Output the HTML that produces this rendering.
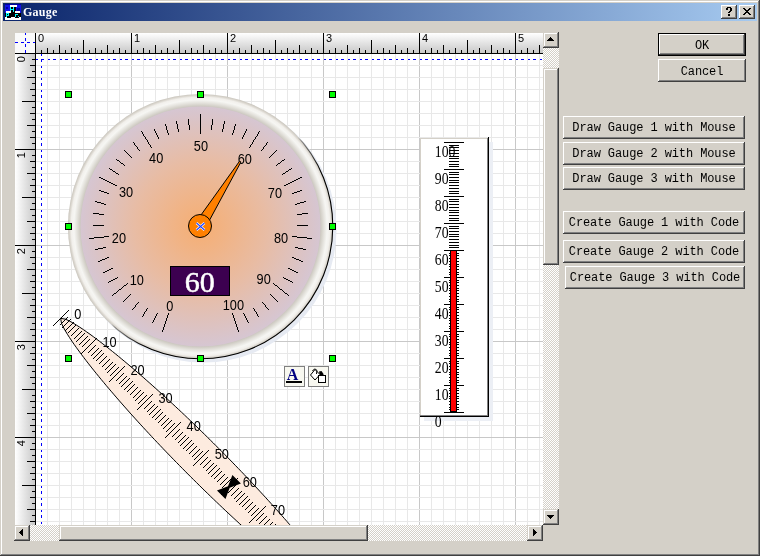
<!DOCTYPE html>
<html><head><meta charset="utf-8"><style>
html,body{margin:0;padding:0;width:760px;height:556px;overflow:hidden;background:#D4D0C8;}

</style></head><body>
<svg width="760" height="556" viewBox="0 0 760 556" style="display:block;will-change:transform">
<defs>
<linearGradient id="title" x1="0" y1="0" x2="1" y2="0"><stop offset="0" stop-color="#0A246A"/><stop offset="1" stop-color="#A6CAF0"/></linearGradient>
<linearGradient id="rulerH" x1="0" y1="0" x2="0" y2="1"><stop offset="0" stop-color="#FFFFFF"/><stop offset="1" stop-color="#C8C8C8"/></linearGradient>
<linearGradient id="rulerV" x1="0" y1="0" x2="1" y2="0"><stop offset="0" stop-color="#FFFFFF"/><stop offset="1" stop-color="#C8C8C8"/></linearGradient>
<pattern id="dith" x="0" y="0" width="2" height="2" patternUnits="userSpaceOnUse"><rect width="2" height="2" fill="#D4D0C8"/><rect x="0" y="0" width="1" height="1" fill="#FFFFFF"/><rect x="1" y="1" width="1" height="1" fill="#FFFFFF"/></pattern>
<radialGradient id="face" cx="0.5" cy="0.5" r="0.5"><stop offset="0" stop-color="#F6AE72"/><stop offset="0.55" stop-color="#E8BCA4"/><stop offset="1" stop-color="#D6C6D2"/></radialGradient>
<radialGradient id="bezel" gradientUnits="userSpaceOnUse" cx="200.5" cy="226.5" r="132.6"><stop offset="0.905" stop-color="#CCC8C0"/><stop offset="0.93" stop-color="#E2E0DA"/><stop offset="0.955" stop-color="#F6F6F3"/><stop offset="0.975" stop-color="#F2F0EC"/><stop offset="0.99" stop-color="#D8D4CC"/><stop offset="1" stop-color="#C8C4BC"/></radialGradient>
<linearGradient id="rimline" x1="0" y1="0" x2="1" y2="1"><stop offset="0.515" stop-color="#000" stop-opacity="0"/><stop offset="0.53" stop-color="#000" stop-opacity="0.35"/><stop offset="0.62" stop-color="#000" stop-opacity="1"/></linearGradient>
<clipPath id="canvasclip"><rect x="36" y="54" width="507" height="471"/></clipPath>
</defs>
<rect x="0" y="0" width="760" height="556" fill="#D4D0C8" />
<rect x="1" y="1" width="757" height="1" fill="#FFFFFF" />
<rect x="1" y="1" width="1" height="553" fill="#FFFFFF" />
<rect x="759" y="0" width="1" height="556" fill="#404040" />
<rect x="0" y="555" width="760" height="1" fill="#404040" />
<rect x="758" y="1" width="1" height="554" fill="#808080" />
<rect x="1" y="554" width="758" height="1" fill="#808080" />
<rect x="3" y="3" width="754" height="18" fill="url(#title)" />
<g shape-rendering="crispEdges">
<rect x="5" y="4" width="16" height="16" fill="#1010E8" />
<rect x="5" y="4" width="16" height="1" fill="#0000A0" />
<rect x="6" y="7" width="2" height="2" fill="#0000A0" />
<rect x="17" y="8" width="3" height="3" fill="#0000A0" />
<rect x="10" y="5" width="7" height="2" fill="#FFFFFF" />
<rect x="10" y="7" width="6" height="6" fill="#000000" />
<rect x="10" y="7" width="1" height="5" fill="#00FFFF" />
<rect x="13" y="7" width="1" height="5" fill="#00FFFF" />
<rect x="10" y="9" width="4" height="1" fill="#00FFFF" />
<rect x="6" y="11" width="5" height="2" fill="#FFFFFF" />
<rect x="15" y="11" width="5" height="2" fill="#FFFFFF" />
<rect x="5" y="13" width="16" height="4" fill="#000000" />
<rect x="11" y="12" width="4" height="1" fill="#000000" />
<rect x="6" y="13" width="1" height="4" fill="#00FFFF" />
<rect x="6" y="13" width="3" height="1" fill="#00FFFF" />
<rect x="8" y="13" width="1" height="2" fill="#00FFFF" />
<rect x="6" y="15" width="3" height="1" fill="#00FFFF" />
<rect x="15" y="14" width="1" height="3" fill="#00FFFF" />
<rect x="15" y="14" width="3" height="1" fill="#00FFFF" />
<rect x="18" y="16" width="1" height="1" fill="#00FFFF" />
<rect x="5" y="17" width="16" height="3" fill="#FFFFFF" />
<rect x="7" y="17" width="4" height="1" fill="#000000" />
<rect x="15" y="17" width="4" height="1" fill="#000000" />
</g>
<text x="23" y="16" font-family="Liberation Serif" font-weight="bold" font-size="12" letter-spacing="0.25" fill="#FFFFFF">Gauge</text>
<g shape-rendering="crispEdges">
<rect x="721" y="5" width="16" height="14" fill="#D4D0C8" />
<rect x="721" y="5" width="16" height="1" fill="#FFFFFF" />
<rect x="721" y="5" width="1" height="14" fill="#FFFFFF" />
<rect x="721" y="18" width="16" height="1" fill="#404040" />
<rect x="736" y="5" width="1" height="14" fill="#404040" />
<rect x="722" y="17" width="14" height="1" fill="#808080" />
<rect x="735" y="6" width="1" height="12" fill="#808080" />
</g>
<g shape-rendering="crispEdges">
<rect x="739" y="5" width="16" height="14" fill="#D4D0C8" />
<rect x="739" y="5" width="16" height="1" fill="#FFFFFF" />
<rect x="739" y="5" width="1" height="14" fill="#FFFFFF" />
<rect x="739" y="18" width="16" height="1" fill="#404040" />
<rect x="754" y="5" width="1" height="14" fill="#404040" />
<rect x="740" y="17" width="14" height="1" fill="#808080" />
<rect x="753" y="6" width="1" height="12" fill="#808080" />
</g>
<g shape-rendering="crispEdges">
<rect x="727" y="7" width="4" height="1" fill="#000000" />
<rect x="726" y="8" width="2" height="2" fill="#000000" />
<rect x="730" y="8" width="2" height="3" fill="#000000" />
<rect x="729" y="11" width="2" height="1" fill="#000000" />
<rect x="728" y="12" width="2" height="1" fill="#000000" />
<rect x="728" y="14" width="2" height="2" fill="#000000" />
<rect x="743" y="8" width="2" height="1" fill="#000000" />
<rect x="749" y="8" width="2" height="1" fill="#000000" />
<rect x="744" y="9" width="2" height="1" fill="#000000" />
<rect x="748" y="9" width="2" height="1" fill="#000000" />
<rect x="745" y="10" width="2" height="1" fill="#000000" />
<rect x="747" y="10" width="2" height="1" fill="#000000" />
<rect x="746" y="11" width="2" height="1" fill="#000000" />
<rect x="746" y="11" width="2" height="1" fill="#000000" />
<rect x="747" y="12" width="2" height="1" fill="#000000" />
<rect x="745" y="12" width="2" height="1" fill="#000000" />
<rect x="748" y="13" width="2" height="1" fill="#000000" />
<rect x="744" y="13" width="2" height="1" fill="#000000" />
<rect x="749" y="14" width="2" height="1" fill="#000000" />
<rect x="743" y="14" width="2" height="1" fill="#000000" />
</g>
<g shape-rendering="crispEdges">
<rect x="658" y="33" width="88" height="23" fill="#000000" />
<rect x="659" y="34" width="86" height="21" fill="#D4D0C8" />
<rect x="659" y="34" width="86" height="1" fill="#FFFFFF" />
<rect x="659" y="34" width="1" height="21" fill="#FFFFFF" />
<rect x="659" y="54" width="86" height="1" fill="#404040" />
<rect x="744" y="34" width="1" height="21" fill="#404040" />
<rect x="660" y="53" width="84" height="1" fill="#808080" />
<rect x="743" y="35" width="1" height="19" fill="#808080" />
<rect x="658" y="59" width="88" height="23" fill="#D4D0C8" />
<rect x="658" y="59" width="88" height="1" fill="#FFFFFF" />
<rect x="658" y="59" width="1" height="23" fill="#FFFFFF" />
<rect x="658" y="81" width="88" height="1" fill="#404040" />
<rect x="745" y="59" width="1" height="23" fill="#404040" />
<rect x="659" y="80" width="86" height="1" fill="#808080" />
<rect x="744" y="60" width="1" height="21" fill="#808080" />
<rect x="563" y="116" width="182" height="23" fill="#D4D0C8" />
<rect x="563" y="116" width="182" height="1" fill="#FFFFFF" />
<rect x="563" y="116" width="1" height="23" fill="#FFFFFF" />
<rect x="563" y="138" width="182" height="1" fill="#404040" />
<rect x="744" y="116" width="1" height="23" fill="#404040" />
<rect x="564" y="137" width="180" height="1" fill="#808080" />
<rect x="743" y="117" width="1" height="21" fill="#808080" />
<rect x="563" y="142" width="182" height="23" fill="#D4D0C8" />
<rect x="563" y="142" width="182" height="1" fill="#FFFFFF" />
<rect x="563" y="142" width="1" height="23" fill="#FFFFFF" />
<rect x="563" y="164" width="182" height="1" fill="#404040" />
<rect x="744" y="142" width="1" height="23" fill="#404040" />
<rect x="564" y="163" width="180" height="1" fill="#808080" />
<rect x="743" y="143" width="1" height="21" fill="#808080" />
<rect x="563" y="167" width="182" height="23" fill="#D4D0C8" />
<rect x="563" y="167" width="182" height="1" fill="#FFFFFF" />
<rect x="563" y="167" width="1" height="23" fill="#FFFFFF" />
<rect x="563" y="189" width="182" height="1" fill="#404040" />
<rect x="744" y="167" width="1" height="23" fill="#404040" />
<rect x="564" y="188" width="180" height="1" fill="#808080" />
<rect x="743" y="168" width="1" height="21" fill="#808080" />
<rect x="563" y="211" width="182" height="23" fill="#D4D0C8" />
<rect x="563" y="211" width="182" height="1" fill="#FFFFFF" />
<rect x="563" y="211" width="1" height="23" fill="#FFFFFF" />
<rect x="563" y="233" width="182" height="1" fill="#404040" />
<rect x="744" y="211" width="1" height="23" fill="#404040" />
<rect x="564" y="232" width="180" height="1" fill="#808080" />
<rect x="743" y="212" width="1" height="21" fill="#808080" />
<rect x="563" y="240" width="182" height="23" fill="#D4D0C8" />
<rect x="563" y="240" width="182" height="1" fill="#FFFFFF" />
<rect x="563" y="240" width="1" height="23" fill="#FFFFFF" />
<rect x="563" y="262" width="182" height="1" fill="#404040" />
<rect x="744" y="240" width="1" height="23" fill="#404040" />
<rect x="564" y="261" width="180" height="1" fill="#808080" />
<rect x="743" y="241" width="1" height="21" fill="#808080" />
<rect x="565" y="266" width="180" height="23" fill="#D4D0C8" />
<rect x="565" y="266" width="180" height="1" fill="#FFFFFF" />
<rect x="565" y="266" width="1" height="23" fill="#FFFFFF" />
<rect x="565" y="288" width="180" height="1" fill="#404040" />
<rect x="744" y="266" width="1" height="23" fill="#404040" />
<rect x="566" y="287" width="178" height="1" fill="#808080" />
<rect x="743" y="267" width="1" height="21" fill="#808080" />
</g>
<text x="702" y="49" text-anchor="middle" font-family="Liberation Mono" font-size="12" letter-spacing="-0.1" fill="#000">OK</text>
<text x="702" y="75" text-anchor="middle" font-family="Liberation Mono" font-size="12" letter-spacing="-0.1" fill="#000">Cancel</text>
<text x="654" y="131" text-anchor="middle" font-family="Liberation Mono" font-size="12" letter-spacing="-0.1" fill="#000">Draw Gauge 1 with Mouse</text>
<text x="654" y="157" text-anchor="middle" font-family="Liberation Mono" font-size="12" letter-spacing="-0.1" fill="#000">Draw Gauge 2 with Mouse</text>
<text x="654" y="182" text-anchor="middle" font-family="Liberation Mono" font-size="12" letter-spacing="-0.1" fill="#000">Draw Gauge 3 with Mouse</text>
<text x="654" y="226" text-anchor="middle" font-family="Liberation Mono" font-size="12" letter-spacing="-0.1" fill="#000">Create Gauge 1 with Code</text>
<text x="654" y="255" text-anchor="middle" font-family="Liberation Mono" font-size="12" letter-spacing="-0.1" fill="#000">Create Gauge 2 with Code</text>
<text x="655" y="281" text-anchor="middle" font-family="Liberation Mono" font-size="12" letter-spacing="-0.1" fill="#000">Create Gauge 3 with Code</text>
<g shape-rendering="crispEdges">
<rect x="15" y="33" width="20" height="20" fill="#FAFAFA" />
<rect x="36" y="33" width="507" height="20" fill="url(#rulerH)" />
<rect x="15" y="54" width="20" height="471" fill="url(#rulerV)" />
<rect x="15" y="53" width="528" height="1" fill="#000000" />
<rect x="35" y="33" width="1" height="492" fill="#000000" />
<rect x="36" y="54" width="507" height="471" fill="#FFFFFF" />
<rect x="15" y="42" width="3" height="1" fill="#0000FF" />
<rect x="21" y="42" width="3" height="1" fill="#0000FF" />
<rect x="27" y="42" width="3" height="1" fill="#0000FF" />
<rect x="33" y="42" width="2" height="1" fill="#0000FF" />
<rect x="25" y="33" width="1" height="2" fill="#0000FF" />
<rect x="25" y="38" width="1" height="3" fill="#0000FF" />
<rect x="25" y="44" width="1" height="3" fill="#0000FF" />
<rect x="25" y="50" width="1" height="3" fill="#0000FF" />
<rect x="36" y="59" width="2" height="1" fill="#0000FF" />
<rect x="41" y="59" width="3" height="1" fill="#0000FF" />
<rect x="47" y="59" width="3" height="1" fill="#0000FF" />
<rect x="53" y="59" width="3" height="1" fill="#0000FF" />
<rect x="59" y="59" width="3" height="1" fill="#0000FF" />
<rect x="65" y="59" width="3" height="1" fill="#0000FF" />
<rect x="71" y="59" width="3" height="1" fill="#0000FF" />
<rect x="77" y="59" width="3" height="1" fill="#0000FF" />
<rect x="83" y="59" width="3" height="1" fill="#0000FF" />
<rect x="89" y="59" width="3" height="1" fill="#0000FF" />
<rect x="95" y="59" width="3" height="1" fill="#0000FF" />
<rect x="101" y="59" width="3" height="1" fill="#0000FF" />
<rect x="107" y="59" width="3" height="1" fill="#0000FF" />
<rect x="113" y="59" width="3" height="1" fill="#0000FF" />
<rect x="119" y="59" width="3" height="1" fill="#0000FF" />
<rect x="125" y="59" width="3" height="1" fill="#0000FF" />
<rect x="131" y="59" width="3" height="1" fill="#0000FF" />
<rect x="137" y="59" width="3" height="1" fill="#0000FF" />
<rect x="143" y="59" width="3" height="1" fill="#0000FF" />
<rect x="149" y="59" width="3" height="1" fill="#0000FF" />
<rect x="155" y="59" width="3" height="1" fill="#0000FF" />
<rect x="161" y="59" width="3" height="1" fill="#0000FF" />
<rect x="167" y="59" width="3" height="1" fill="#0000FF" />
<rect x="173" y="59" width="3" height="1" fill="#0000FF" />
<rect x="179" y="59" width="3" height="1" fill="#0000FF" />
<rect x="185" y="59" width="3" height="1" fill="#0000FF" />
<rect x="191" y="59" width="3" height="1" fill="#0000FF" />
<rect x="197" y="59" width="3" height="1" fill="#0000FF" />
<rect x="203" y="59" width="3" height="1" fill="#0000FF" />
<rect x="209" y="59" width="3" height="1" fill="#0000FF" />
<rect x="215" y="59" width="3" height="1" fill="#0000FF" />
<rect x="221" y="59" width="3" height="1" fill="#0000FF" />
<rect x="227" y="59" width="3" height="1" fill="#0000FF" />
<rect x="233" y="59" width="3" height="1" fill="#0000FF" />
<rect x="239" y="59" width="3" height="1" fill="#0000FF" />
<rect x="245" y="59" width="3" height="1" fill="#0000FF" />
<rect x="251" y="59" width="3" height="1" fill="#0000FF" />
<rect x="257" y="59" width="3" height="1" fill="#0000FF" />
<rect x="263" y="59" width="3" height="1" fill="#0000FF" />
<rect x="269" y="59" width="3" height="1" fill="#0000FF" />
<rect x="275" y="59" width="3" height="1" fill="#0000FF" />
<rect x="281" y="59" width="3" height="1" fill="#0000FF" />
<rect x="287" y="59" width="3" height="1" fill="#0000FF" />
<rect x="293" y="59" width="3" height="1" fill="#0000FF" />
<rect x="299" y="59" width="3" height="1" fill="#0000FF" />
<rect x="305" y="59" width="3" height="1" fill="#0000FF" />
<rect x="311" y="59" width="3" height="1" fill="#0000FF" />
<rect x="317" y="59" width="3" height="1" fill="#0000FF" />
<rect x="323" y="59" width="3" height="1" fill="#0000FF" />
<rect x="329" y="59" width="3" height="1" fill="#0000FF" />
<rect x="335" y="59" width="3" height="1" fill="#0000FF" />
<rect x="341" y="59" width="3" height="1" fill="#0000FF" />
<rect x="347" y="59" width="3" height="1" fill="#0000FF" />
<rect x="353" y="59" width="3" height="1" fill="#0000FF" />
<rect x="359" y="59" width="3" height="1" fill="#0000FF" />
<rect x="365" y="59" width="3" height="1" fill="#0000FF" />
<rect x="371" y="59" width="3" height="1" fill="#0000FF" />
<rect x="377" y="59" width="3" height="1" fill="#0000FF" />
<rect x="383" y="59" width="3" height="1" fill="#0000FF" />
<rect x="389" y="59" width="3" height="1" fill="#0000FF" />
<rect x="395" y="59" width="3" height="1" fill="#0000FF" />
<rect x="401" y="59" width="3" height="1" fill="#0000FF" />
<rect x="407" y="59" width="3" height="1" fill="#0000FF" />
<rect x="413" y="59" width="3" height="1" fill="#0000FF" />
<rect x="419" y="59" width="3" height="1" fill="#0000FF" />
<rect x="425" y="59" width="3" height="1" fill="#0000FF" />
<rect x="431" y="59" width="3" height="1" fill="#0000FF" />
<rect x="437" y="59" width="3" height="1" fill="#0000FF" />
<rect x="443" y="59" width="3" height="1" fill="#0000FF" />
<rect x="449" y="59" width="3" height="1" fill="#0000FF" />
<rect x="455" y="59" width="3" height="1" fill="#0000FF" />
<rect x="461" y="59" width="3" height="1" fill="#0000FF" />
<rect x="467" y="59" width="3" height="1" fill="#0000FF" />
<rect x="473" y="59" width="3" height="1" fill="#0000FF" />
<rect x="479" y="59" width="3" height="1" fill="#0000FF" />
<rect x="485" y="59" width="3" height="1" fill="#0000FF" />
<rect x="491" y="59" width="3" height="1" fill="#0000FF" />
<rect x="497" y="59" width="3" height="1" fill="#0000FF" />
<rect x="503" y="59" width="3" height="1" fill="#0000FF" />
<rect x="509" y="59" width="3" height="1" fill="#0000FF" />
<rect x="515" y="59" width="3" height="1" fill="#0000FF" />
<rect x="521" y="59" width="3" height="1" fill="#0000FF" />
<rect x="527" y="59" width="3" height="1" fill="#0000FF" />
<rect x="533" y="59" width="3" height="1" fill="#0000FF" />
<rect x="539" y="59" width="3" height="1" fill="#0000FF" />
<rect x="41" y="54" width="1" height="2" fill="#0000FF" />
<rect x="41" y="59" width="1" height="3" fill="#0000FF" />
<rect x="41" y="65" width="1" height="3" fill="#0000FF" />
<rect x="41" y="71" width="1" height="3" fill="#0000FF" />
<rect x="41" y="77" width="1" height="3" fill="#0000FF" />
<rect x="41" y="83" width="1" height="3" fill="#0000FF" />
<rect x="41" y="89" width="1" height="3" fill="#0000FF" />
<rect x="41" y="95" width="1" height="3" fill="#0000FF" />
<rect x="41" y="101" width="1" height="3" fill="#0000FF" />
<rect x="41" y="107" width="1" height="3" fill="#0000FF" />
<rect x="41" y="113" width="1" height="3" fill="#0000FF" />
<rect x="41" y="119" width="1" height="3" fill="#0000FF" />
<rect x="41" y="125" width="1" height="3" fill="#0000FF" />
<rect x="41" y="131" width="1" height="3" fill="#0000FF" />
<rect x="41" y="137" width="1" height="3" fill="#0000FF" />
<rect x="41" y="143" width="1" height="3" fill="#0000FF" />
<rect x="41" y="149" width="1" height="3" fill="#0000FF" />
<rect x="41" y="155" width="1" height="3" fill="#0000FF" />
<rect x="41" y="161" width="1" height="3" fill="#0000FF" />
<rect x="41" y="167" width="1" height="3" fill="#0000FF" />
<rect x="41" y="173" width="1" height="3" fill="#0000FF" />
<rect x="41" y="179" width="1" height="3" fill="#0000FF" />
<rect x="41" y="185" width="1" height="3" fill="#0000FF" />
<rect x="41" y="191" width="1" height="3" fill="#0000FF" />
<rect x="41" y="197" width="1" height="3" fill="#0000FF" />
<rect x="41" y="203" width="1" height="3" fill="#0000FF" />
<rect x="41" y="209" width="1" height="3" fill="#0000FF" />
<rect x="41" y="215" width="1" height="3" fill="#0000FF" />
<rect x="41" y="221" width="1" height="3" fill="#0000FF" />
<rect x="41" y="227" width="1" height="3" fill="#0000FF" />
<rect x="41" y="233" width="1" height="3" fill="#0000FF" />
<rect x="41" y="239" width="1" height="3" fill="#0000FF" />
<rect x="41" y="245" width="1" height="3" fill="#0000FF" />
<rect x="41" y="251" width="1" height="3" fill="#0000FF" />
<rect x="41" y="257" width="1" height="3" fill="#0000FF" />
<rect x="41" y="263" width="1" height="3" fill="#0000FF" />
<rect x="41" y="269" width="1" height="3" fill="#0000FF" />
<rect x="41" y="275" width="1" height="3" fill="#0000FF" />
<rect x="41" y="281" width="1" height="3" fill="#0000FF" />
<rect x="41" y="287" width="1" height="3" fill="#0000FF" />
<rect x="41" y="293" width="1" height="3" fill="#0000FF" />
<rect x="41" y="299" width="1" height="3" fill="#0000FF" />
<rect x="41" y="305" width="1" height="3" fill="#0000FF" />
<rect x="41" y="311" width="1" height="3" fill="#0000FF" />
<rect x="41" y="317" width="1" height="3" fill="#0000FF" />
<rect x="41" y="323" width="1" height="3" fill="#0000FF" />
<rect x="41" y="329" width="1" height="3" fill="#0000FF" />
<rect x="41" y="335" width="1" height="3" fill="#0000FF" />
<rect x="41" y="341" width="1" height="3" fill="#0000FF" />
<rect x="41" y="347" width="1" height="3" fill="#0000FF" />
<rect x="41" y="353" width="1" height="3" fill="#0000FF" />
<rect x="41" y="359" width="1" height="3" fill="#0000FF" />
<rect x="41" y="365" width="1" height="3" fill="#0000FF" />
<rect x="41" y="371" width="1" height="3" fill="#0000FF" />
<rect x="41" y="377" width="1" height="3" fill="#0000FF" />
<rect x="41" y="383" width="1" height="3" fill="#0000FF" />
<rect x="41" y="389" width="1" height="3" fill="#0000FF" />
<rect x="41" y="395" width="1" height="3" fill="#0000FF" />
<rect x="41" y="401" width="1" height="3" fill="#0000FF" />
<rect x="41" y="407" width="1" height="3" fill="#0000FF" />
<rect x="41" y="413" width="1" height="3" fill="#0000FF" />
<rect x="41" y="419" width="1" height="3" fill="#0000FF" />
<rect x="41" y="425" width="1" height="3" fill="#0000FF" />
<rect x="41" y="431" width="1" height="3" fill="#0000FF" />
<rect x="41" y="437" width="1" height="3" fill="#0000FF" />
<rect x="41" y="443" width="1" height="3" fill="#0000FF" />
<rect x="41" y="449" width="1" height="3" fill="#0000FF" />
<rect x="41" y="455" width="1" height="3" fill="#0000FF" />
<rect x="41" y="461" width="1" height="3" fill="#0000FF" />
<rect x="41" y="467" width="1" height="3" fill="#0000FF" />
<rect x="41" y="473" width="1" height="3" fill="#0000FF" />
<rect x="41" y="479" width="1" height="3" fill="#0000FF" />
<rect x="41" y="485" width="1" height="3" fill="#0000FF" />
<rect x="41" y="491" width="1" height="3" fill="#0000FF" />
<rect x="41" y="497" width="1" height="3" fill="#0000FF" />
<rect x="41" y="503" width="1" height="3" fill="#0000FF" />
<rect x="41" y="509" width="1" height="3" fill="#0000FF" />
<rect x="41" y="515" width="1" height="3" fill="#0000FF" />
<rect x="41" y="521" width="1" height="3" fill="#0000FF" />
<rect x="47" y="54" width="1" height="471" fill="#E8E8E8" />
<rect x="59" y="54" width="1" height="471" fill="#E8E8E8" />
<rect x="71" y="54" width="1" height="471" fill="#E8E8E8" />
<rect x="83" y="54" width="1" height="471" fill="#E8E8E8" />
<rect x="95" y="54" width="1" height="471" fill="#E8E8E8" />
<rect x="107" y="54" width="1" height="471" fill="#E8E8E8" />
<rect x="119" y="54" width="1" height="471" fill="#E8E8E8" />
<rect x="131" y="54" width="1" height="471" fill="#C8C8C8" />
<rect x="143" y="54" width="1" height="471" fill="#E8E8E8" />
<rect x="155" y="54" width="1" height="471" fill="#E8E8E8" />
<rect x="167" y="54" width="1" height="471" fill="#E8E8E8" />
<rect x="179" y="54" width="1" height="471" fill="#E8E8E8" />
<rect x="191" y="54" width="1" height="471" fill="#E8E8E8" />
<rect x="203" y="54" width="1" height="471" fill="#E8E8E8" />
<rect x="215" y="54" width="1" height="471" fill="#E8E8E8" />
<rect x="227" y="54" width="1" height="471" fill="#C8C8C8" />
<rect x="239" y="54" width="1" height="471" fill="#E8E8E8" />
<rect x="251" y="54" width="1" height="471" fill="#E8E8E8" />
<rect x="263" y="54" width="1" height="471" fill="#E8E8E8" />
<rect x="275" y="54" width="1" height="471" fill="#E8E8E8" />
<rect x="287" y="54" width="1" height="471" fill="#E8E8E8" />
<rect x="299" y="54" width="1" height="471" fill="#E8E8E8" />
<rect x="311" y="54" width="1" height="471" fill="#E8E8E8" />
<rect x="323" y="54" width="1" height="471" fill="#C8C8C8" />
<rect x="335" y="54" width="1" height="471" fill="#E8E8E8" />
<rect x="347" y="54" width="1" height="471" fill="#E8E8E8" />
<rect x="359" y="54" width="1" height="471" fill="#E8E8E8" />
<rect x="371" y="54" width="1" height="471" fill="#E8E8E8" />
<rect x="383" y="54" width="1" height="471" fill="#E8E8E8" />
<rect x="395" y="54" width="1" height="471" fill="#E8E8E8" />
<rect x="407" y="54" width="1" height="471" fill="#E8E8E8" />
<rect x="419" y="54" width="1" height="471" fill="#C8C8C8" />
<rect x="431" y="54" width="1" height="471" fill="#E8E8E8" />
<rect x="443" y="54" width="1" height="471" fill="#E8E8E8" />
<rect x="455" y="54" width="1" height="471" fill="#E8E8E8" />
<rect x="467" y="54" width="1" height="471" fill="#E8E8E8" />
<rect x="479" y="54" width="1" height="471" fill="#E8E8E8" />
<rect x="491" y="54" width="1" height="471" fill="#E8E8E8" />
<rect x="503" y="54" width="1" height="471" fill="#E8E8E8" />
<rect x="515" y="54" width="1" height="471" fill="#C8C8C8" />
<rect x="527" y="54" width="1" height="471" fill="#E8E8E8" />
<rect x="539" y="54" width="1" height="471" fill="#E8E8E8" />
<rect x="36" y="65" width="507" height="1" fill="#E8E8E8" />
<rect x="36" y="77" width="507" height="1" fill="#E8E8E8" />
<rect x="36" y="89" width="507" height="1" fill="#E8E8E8" />
<rect x="36" y="101" width="507" height="1" fill="#E8E8E8" />
<rect x="36" y="113" width="507" height="1" fill="#E8E8E8" />
<rect x="36" y="125" width="507" height="1" fill="#E8E8E8" />
<rect x="36" y="137" width="507" height="1" fill="#E8E8E8" />
<rect x="36" y="149" width="507" height="1" fill="#C8C8C8" />
<rect x="36" y="161" width="507" height="1" fill="#E8E8E8" />
<rect x="36" y="173" width="507" height="1" fill="#E8E8E8" />
<rect x="36" y="185" width="507" height="1" fill="#E8E8E8" />
<rect x="36" y="197" width="507" height="1" fill="#E8E8E8" />
<rect x="36" y="209" width="507" height="1" fill="#E8E8E8" />
<rect x="36" y="221" width="507" height="1" fill="#E8E8E8" />
<rect x="36" y="233" width="507" height="1" fill="#E8E8E8" />
<rect x="36" y="245" width="507" height="1" fill="#C8C8C8" />
<rect x="36" y="257" width="507" height="1" fill="#E8E8E8" />
<rect x="36" y="269" width="507" height="1" fill="#E8E8E8" />
<rect x="36" y="281" width="507" height="1" fill="#E8E8E8" />
<rect x="36" y="293" width="507" height="1" fill="#E8E8E8" />
<rect x="36" y="305" width="507" height="1" fill="#E8E8E8" />
<rect x="36" y="317" width="507" height="1" fill="#E8E8E8" />
<rect x="36" y="329" width="507" height="1" fill="#E8E8E8" />
<rect x="36" y="341" width="507" height="1" fill="#C8C8C8" />
<rect x="36" y="353" width="507" height="1" fill="#E8E8E8" />
<rect x="36" y="365" width="507" height="1" fill="#E8E8E8" />
<rect x="36" y="377" width="507" height="1" fill="#E8E8E8" />
<rect x="36" y="389" width="507" height="1" fill="#E8E8E8" />
<rect x="36" y="401" width="507" height="1" fill="#E8E8E8" />
<rect x="36" y="413" width="507" height="1" fill="#E8E8E8" />
<rect x="36" y="425" width="507" height="1" fill="#E8E8E8" />
<rect x="36" y="437" width="507" height="1" fill="#C8C8C8" />
<rect x="36" y="449" width="507" height="1" fill="#E8E8E8" />
<rect x="36" y="461" width="507" height="1" fill="#E8E8E8" />
<rect x="36" y="473" width="507" height="1" fill="#E8E8E8" />
<rect x="36" y="485" width="507" height="1" fill="#E8E8E8" />
<rect x="36" y="497" width="507" height="1" fill="#E8E8E8" />
<rect x="36" y="509" width="507" height="1" fill="#E8E8E8" />
<rect x="36" y="521" width="507" height="1" fill="#E8E8E8" />
<rect x="41" y="50" width="1" height="3" fill="#000000" />
<rect x="47" y="48" width="1" height="5" fill="#000000" />
<rect x="53" y="50" width="1" height="3" fill="#000000" />
<rect x="59" y="45" width="1" height="8" fill="#000000" />
<rect x="65" y="50" width="1" height="3" fill="#000000" />
<rect x="71" y="48" width="1" height="5" fill="#000000" />
<rect x="77" y="50" width="1" height="3" fill="#000000" />
<rect x="83" y="40" width="1" height="13" fill="#000000" />
<rect x="89" y="50" width="1" height="3" fill="#000000" />
<rect x="95" y="48" width="1" height="5" fill="#000000" />
<rect x="101" y="50" width="1" height="3" fill="#000000" />
<rect x="107" y="45" width="1" height="8" fill="#000000" />
<rect x="113" y="50" width="1" height="3" fill="#000000" />
<rect x="119" y="48" width="1" height="5" fill="#000000" />
<rect x="125" y="50" width="1" height="3" fill="#000000" />
<rect x="131" y="33" width="1" height="20" fill="#000000" />
<rect x="137" y="50" width="1" height="3" fill="#000000" />
<rect x="143" y="48" width="1" height="5" fill="#000000" />
<rect x="149" y="50" width="1" height="3" fill="#000000" />
<rect x="155" y="45" width="1" height="8" fill="#000000" />
<rect x="161" y="50" width="1" height="3" fill="#000000" />
<rect x="167" y="48" width="1" height="5" fill="#000000" />
<rect x="173" y="50" width="1" height="3" fill="#000000" />
<rect x="179" y="40" width="1" height="13" fill="#000000" />
<rect x="185" y="50" width="1" height="3" fill="#000000" />
<rect x="191" y="48" width="1" height="5" fill="#000000" />
<rect x="197" y="50" width="1" height="3" fill="#000000" />
<rect x="203" y="45" width="1" height="8" fill="#000000" />
<rect x="209" y="50" width="1" height="3" fill="#000000" />
<rect x="215" y="48" width="1" height="5" fill="#000000" />
<rect x="221" y="50" width="1" height="3" fill="#000000" />
<rect x="227" y="33" width="1" height="20" fill="#000000" />
<rect x="233" y="50" width="1" height="3" fill="#000000" />
<rect x="239" y="48" width="1" height="5" fill="#000000" />
<rect x="245" y="50" width="1" height="3" fill="#000000" />
<rect x="251" y="45" width="1" height="8" fill="#000000" />
<rect x="257" y="50" width="1" height="3" fill="#000000" />
<rect x="263" y="48" width="1" height="5" fill="#000000" />
<rect x="269" y="50" width="1" height="3" fill="#000000" />
<rect x="275" y="40" width="1" height="13" fill="#000000" />
<rect x="281" y="50" width="1" height="3" fill="#000000" />
<rect x="287" y="48" width="1" height="5" fill="#000000" />
<rect x="293" y="50" width="1" height="3" fill="#000000" />
<rect x="299" y="45" width="1" height="8" fill="#000000" />
<rect x="305" y="50" width="1" height="3" fill="#000000" />
<rect x="311" y="48" width="1" height="5" fill="#000000" />
<rect x="317" y="50" width="1" height="3" fill="#000000" />
<rect x="323" y="33" width="1" height="20" fill="#000000" />
<rect x="329" y="50" width="1" height="3" fill="#000000" />
<rect x="335" y="48" width="1" height="5" fill="#000000" />
<rect x="341" y="50" width="1" height="3" fill="#000000" />
<rect x="347" y="45" width="1" height="8" fill="#000000" />
<rect x="353" y="50" width="1" height="3" fill="#000000" />
<rect x="359" y="48" width="1" height="5" fill="#000000" />
<rect x="365" y="50" width="1" height="3" fill="#000000" />
<rect x="371" y="40" width="1" height="13" fill="#000000" />
<rect x="377" y="50" width="1" height="3" fill="#000000" />
<rect x="383" y="48" width="1" height="5" fill="#000000" />
<rect x="389" y="50" width="1" height="3" fill="#000000" />
<rect x="395" y="45" width="1" height="8" fill="#000000" />
<rect x="401" y="50" width="1" height="3" fill="#000000" />
<rect x="407" y="48" width="1" height="5" fill="#000000" />
<rect x="413" y="50" width="1" height="3" fill="#000000" />
<rect x="419" y="33" width="1" height="20" fill="#000000" />
<rect x="425" y="50" width="1" height="3" fill="#000000" />
<rect x="431" y="48" width="1" height="5" fill="#000000" />
<rect x="437" y="50" width="1" height="3" fill="#000000" />
<rect x="443" y="45" width="1" height="8" fill="#000000" />
<rect x="449" y="50" width="1" height="3" fill="#000000" />
<rect x="455" y="48" width="1" height="5" fill="#000000" />
<rect x="461" y="50" width="1" height="3" fill="#000000" />
<rect x="467" y="40" width="1" height="13" fill="#000000" />
<rect x="473" y="50" width="1" height="3" fill="#000000" />
<rect x="479" y="48" width="1" height="5" fill="#000000" />
<rect x="485" y="50" width="1" height="3" fill="#000000" />
<rect x="491" y="45" width="1" height="8" fill="#000000" />
<rect x="497" y="50" width="1" height="3" fill="#000000" />
<rect x="503" y="48" width="1" height="5" fill="#000000" />
<rect x="509" y="50" width="1" height="3" fill="#000000" />
<rect x="515" y="33" width="1" height="20" fill="#000000" />
<rect x="521" y="50" width="1" height="3" fill="#000000" />
<rect x="527" y="48" width="1" height="5" fill="#000000" />
<rect x="533" y="50" width="1" height="3" fill="#000000" />
<rect x="539" y="45" width="1" height="8" fill="#000000" />
<rect x="32" y="59" width="3" height="1" fill="#000000" />
<rect x="30" y="65" width="5" height="1" fill="#000000" />
<rect x="32" y="71" width="3" height="1" fill="#000000" />
<rect x="27" y="77" width="8" height="1" fill="#000000" />
<rect x="32" y="83" width="3" height="1" fill="#000000" />
<rect x="30" y="89" width="5" height="1" fill="#000000" />
<rect x="32" y="95" width="3" height="1" fill="#000000" />
<rect x="22" y="101" width="13" height="1" fill="#000000" />
<rect x="32" y="107" width="3" height="1" fill="#000000" />
<rect x="30" y="113" width="5" height="1" fill="#000000" />
<rect x="32" y="119" width="3" height="1" fill="#000000" />
<rect x="27" y="125" width="8" height="1" fill="#000000" />
<rect x="32" y="131" width="3" height="1" fill="#000000" />
<rect x="30" y="137" width="5" height="1" fill="#000000" />
<rect x="32" y="143" width="3" height="1" fill="#000000" />
<rect x="15" y="149" width="20" height="1" fill="#000000" />
<rect x="32" y="155" width="3" height="1" fill="#000000" />
<rect x="30" y="161" width="5" height="1" fill="#000000" />
<rect x="32" y="167" width="3" height="1" fill="#000000" />
<rect x="27" y="173" width="8" height="1" fill="#000000" />
<rect x="32" y="179" width="3" height="1" fill="#000000" />
<rect x="30" y="185" width="5" height="1" fill="#000000" />
<rect x="32" y="191" width="3" height="1" fill="#000000" />
<rect x="22" y="197" width="13" height="1" fill="#000000" />
<rect x="32" y="203" width="3" height="1" fill="#000000" />
<rect x="30" y="209" width="5" height="1" fill="#000000" />
<rect x="32" y="215" width="3" height="1" fill="#000000" />
<rect x="27" y="221" width="8" height="1" fill="#000000" />
<rect x="32" y="227" width="3" height="1" fill="#000000" />
<rect x="30" y="233" width="5" height="1" fill="#000000" />
<rect x="32" y="239" width="3" height="1" fill="#000000" />
<rect x="15" y="245" width="20" height="1" fill="#000000" />
<rect x="32" y="251" width="3" height="1" fill="#000000" />
<rect x="30" y="257" width="5" height="1" fill="#000000" />
<rect x="32" y="263" width="3" height="1" fill="#000000" />
<rect x="27" y="269" width="8" height="1" fill="#000000" />
<rect x="32" y="275" width="3" height="1" fill="#000000" />
<rect x="30" y="281" width="5" height="1" fill="#000000" />
<rect x="32" y="287" width="3" height="1" fill="#000000" />
<rect x="22" y="293" width="13" height="1" fill="#000000" />
<rect x="32" y="299" width="3" height="1" fill="#000000" />
<rect x="30" y="305" width="5" height="1" fill="#000000" />
<rect x="32" y="311" width="3" height="1" fill="#000000" />
<rect x="27" y="317" width="8" height="1" fill="#000000" />
<rect x="32" y="323" width="3" height="1" fill="#000000" />
<rect x="30" y="329" width="5" height="1" fill="#000000" />
<rect x="32" y="335" width="3" height="1" fill="#000000" />
<rect x="15" y="341" width="20" height="1" fill="#000000" />
<rect x="32" y="347" width="3" height="1" fill="#000000" />
<rect x="30" y="353" width="5" height="1" fill="#000000" />
<rect x="32" y="359" width="3" height="1" fill="#000000" />
<rect x="27" y="365" width="8" height="1" fill="#000000" />
<rect x="32" y="371" width="3" height="1" fill="#000000" />
<rect x="30" y="377" width="5" height="1" fill="#000000" />
<rect x="32" y="383" width="3" height="1" fill="#000000" />
<rect x="22" y="389" width="13" height="1" fill="#000000" />
<rect x="32" y="395" width="3" height="1" fill="#000000" />
<rect x="30" y="401" width="5" height="1" fill="#000000" />
<rect x="32" y="407" width="3" height="1" fill="#000000" />
<rect x="27" y="413" width="8" height="1" fill="#000000" />
<rect x="32" y="419" width="3" height="1" fill="#000000" />
<rect x="30" y="425" width="5" height="1" fill="#000000" />
<rect x="32" y="431" width="3" height="1" fill="#000000" />
<rect x="15" y="437" width="20" height="1" fill="#000000" />
<rect x="32" y="443" width="3" height="1" fill="#000000" />
<rect x="30" y="449" width="5" height="1" fill="#000000" />
<rect x="32" y="455" width="3" height="1" fill="#000000" />
<rect x="27" y="461" width="8" height="1" fill="#000000" />
<rect x="32" y="467" width="3" height="1" fill="#000000" />
<rect x="30" y="473" width="5" height="1" fill="#000000" />
<rect x="32" y="479" width="3" height="1" fill="#000000" />
<rect x="22" y="485" width="13" height="1" fill="#000000" />
<rect x="32" y="491" width="3" height="1" fill="#000000" />
<rect x="30" y="497" width="5" height="1" fill="#000000" />
<rect x="32" y="503" width="3" height="1" fill="#000000" />
<rect x="27" y="509" width="8" height="1" fill="#000000" />
<rect x="32" y="515" width="3" height="1" fill="#000000" />
<rect x="30" y="521" width="5" height="1" fill="#000000" />
</g>
<text x="38" y="42" font-family="Liberation Sans" font-size="11" fill="#000">0</text>
<text x="134" y="42" font-family="Liberation Sans" font-size="11" fill="#000">1</text>
<text x="230" y="42" font-family="Liberation Sans" font-size="11" fill="#000">2</text>
<text x="326" y="42" font-family="Liberation Sans" font-size="11" fill="#000">3</text>
<text x="422" y="42" font-family="Liberation Sans" font-size="11" fill="#000">4</text>
<text x="518" y="42" font-family="Liberation Sans" font-size="11" fill="#000">5</text>
<text transform="translate(25,56) rotate(-90)" text-anchor="end" font-family="Liberation Sans" font-size="11" fill="#000">0</text>
<text transform="translate(25,152) rotate(-90)" text-anchor="end" font-family="Liberation Sans" font-size="11" fill="#000">1</text>
<text transform="translate(25,248) rotate(-90)" text-anchor="end" font-family="Liberation Sans" font-size="11" fill="#000">2</text>
<text transform="translate(25,344) rotate(-90)" text-anchor="end" font-family="Liberation Sans" font-size="11" fill="#000">3</text>
<text transform="translate(25,440) rotate(-90)" text-anchor="end" font-family="Liberation Sans" font-size="11" fill="#000">4</text>
<g clip-path="url(#canvasclip)">
<circle cx="203.5" cy="229.5" r="133" fill="#E6EAF2"/>
<circle cx="200.5" cy="226.5" r="132.6" fill="url(#bezel)"/>
<circle cx="200.5" cy="226.5" r="120" fill="url(#face)"/>
<circle cx="200.5" cy="226.5" r="132.3" fill="none" stroke="url(#rimline)" stroke-width="1.1"/>
<path d="M89 238h1v1h-1zM90 238h1v1h-1zM91 238h1v1h-1zM92 238h1v1h-1zM93 213h1v1h-1zM93 225h1v1h-1zM93 238h1v1h-1zM94 213h1v1h-1zM94 225h1v1h-1zM94 237h1v1h-1zM95 201h1v1h-1zM95 213h1v1h-1zM95 225h1v1h-1zM95 237h1v1h-1zM95 249h1v1h-1zM96 201h1v1h-1zM96 213h1v1h-1zM96 225h1v1h-1zM96 237h1v1h-1zM96 249h1v1h-1zM97 202h1v1h-1zM97 213h1v1h-1zM97 225h1v1h-1zM97 237h1v1h-1zM97 249h1v1h-1zM98 202h1v1h-1zM98 213h1v1h-1zM98 225h1v1h-1zM98 237h1v1h-1zM98 248h1v1h-1zM98 261h1v1h-1zM99 177h1v1h-1zM99 190h1v1h-1zM99 202h1v1h-1zM99 214h1v1h-1zM99 225h1v1h-1zM99 237h1v1h-1zM99 248h1v1h-1zM99 261h1v1h-1zM100 177h1v1h-1zM100 190h1v1h-1zM100 202h1v1h-1zM100 214h1v1h-1zM100 225h1v1h-1zM100 237h1v1h-1zM100 248h1v1h-1zM100 260h1v1h-1zM101 178h1v1h-1zM101 191h1v1h-1zM101 203h1v1h-1zM101 214h1v1h-1zM101 225h1v1h-1zM101 237h1v1h-1zM101 248h1v1h-1zM101 260h1v1h-1zM102 178h1v1h-1zM102 191h1v1h-1zM102 203h1v1h-1zM102 214h1v1h-1zM102 225h1v1h-1zM102 237h1v1h-1zM102 248h1v1h-1zM102 259h1v1h-1zM103 179h1v1h-1zM103 191h1v1h-1zM103 203h1v1h-1zM103 214h1v1h-1zM103 225h1v1h-1zM103 237h1v1h-1zM103 247h1v1h-1zM103 259h1v1h-1zM103 272h1v1h-1zM104 179h1v1h-1zM104 192h1v1h-1zM104 204h1v1h-1zM104 236h1v1h-1zM104 247h1v1h-1zM104 259h1v1h-1zM104 272h1v1h-1zM105 180h1v1h-1zM105 192h1v1h-1zM105 204h1v1h-1zM105 236h1v1h-1zM105 247h1v1h-1zM105 258h1v1h-1zM105 271h1v1h-1zM106 180h1v1h-1zM106 192h1v1h-1zM106 236h1v1h-1zM106 258h1v1h-1zM106 271h1v1h-1zM107 181h1v1h-1zM107 193h1v1h-1zM107 236h1v1h-1zM107 257h1v1h-1zM107 270h1v1h-1zM108 181h1v1h-1zM108 193h1v1h-1zM108 236h1v1h-1zM108 257h1v1h-1zM108 270h1v1h-1zM108 282h1v1h-1zM109 168h1v1h-1zM109 182h1v1h-1zM109 269h1v1h-1zM109 281h1v1h-1zM110 169h1v1h-1zM110 182h1v1h-1zM110 269h1v1h-1zM110 281h1v1h-1zM111 169h1v1h-1zM111 183h1v1h-1zM111 268h1v1h-1zM111 280h1v1h-1zM112 170h1v1h-1zM112 183h1v1h-1zM112 268h1v1h-1zM112 280h1v1h-1zM112 295h1v1h-1zM113 171h1v1h-1zM113 184h1v1h-1zM113 279h1v1h-1zM113 294h1v1h-1zM114 171h1v1h-1zM114 184h1v1h-1zM114 279h1v1h-1zM114 293h1v1h-1zM115 172h1v1h-1zM115 185h1v1h-1zM115 278h1v1h-1zM115 293h1v1h-1zM116 159h1v1h-1zM116 173h1v1h-1zM116 185h1v1h-1zM116 278h1v1h-1zM116 292h1v1h-1zM117 160h1v1h-1zM117 173h1v1h-1zM117 277h1v1h-1zM117 291h1v1h-1zM118 160h1v1h-1zM118 174h1v1h-1zM118 290h1v1h-1zM119 161h1v1h-1zM119 289h1v1h-1zM120 162h1v1h-1zM120 289h1v1h-1zM121 163h1v1h-1zM121 288h1v1h-1zM122 163h1v1h-1zM122 287h1v1h-1zM123 164h1v1h-1zM123 286h1v1h-1zM123 301h1v1h-1zM124 150h1v1h-1zM124 165h1v1h-1zM124 285h1v1h-1zM124 300h1v1h-1zM125 151h1v1h-1zM125 285h1v1h-1zM125 299h1v1h-1zM126 152h1v1h-1zM126 284h1v1h-1zM126 298h1v1h-1zM127 153h1v1h-1zM127 283h1v1h-1zM127 297h1v1h-1zM128 154h1v1h-1zM128 296h1v1h-1zM129 155h1v1h-1zM129 295h1v1h-1zM130 156h1v1h-1zM130 294h1v1h-1zM131 157h1v1h-1zM132 309h1v1h-1zM133 142h1v1h-1zM133 308h1v1h-1zM134 143h1v1h-1zM134 144h1v1h-1zM134 307h1v1h-1zM135 145h1v1h-1zM135 305h1v1h-1zM135 306h1v1h-1zM136 146h1v1h-1zM136 304h1v1h-1zM137 147h1v1h-1zM137 148h1v1h-1zM137 303h1v1h-1zM138 149h1v1h-1zM138 302h1v1h-1zM139 150h1v1h-1zM141 131h1v1h-1zM142 132h1v1h-1zM142 133h1v1h-1zM142 316h1v1h-1zM143 134h1v1h-1zM143 135h1v1h-1zM143 314h1v1h-1zM143 315h1v1h-1zM144 136h1v1h-1zM144 312h1v1h-1zM144 313h1v1h-1zM145 137h1v1h-1zM145 138h1v1h-1zM145 311h1v1h-1zM146 139h1v1h-1zM146 309h1v1h-1zM146 310h1v1h-1zM147 140h1v1h-1zM147 141h1v1h-1zM147 308h1v1h-1zM148 142h1v1h-1zM148 143h1v1h-1zM149 144h1v1h-1zM150 145h1v1h-1zM150 146h1v1h-1zM151 147h1v1h-1zM152 322h1v1h-1zM153 320h1v1h-1zM153 321h1v1h-1zM154 129h1v1h-1zM154 130h1v1h-1zM154 318h1v1h-1zM154 319h1v1h-1zM155 131h1v1h-1zM155 132h1v1h-1zM155 316h1v1h-1zM155 317h1v1h-1zM156 133h1v1h-1zM156 134h1v1h-1zM156 314h1v1h-1zM156 315h1v1h-1zM157 135h1v1h-1zM157 136h1v1h-1zM157 313h1v1h-1zM158 137h1v1h-1zM158 138h1v1h-1zM162 330h1v1h-1zM162 331h1v1h-1zM163 327h1v1h-1zM163 328h1v1h-1zM163 329h1v1h-1zM164 324h1v1h-1zM164 325h1v1h-1zM164 326h1v1h-1zM165 124h1v1h-1zM165 125h1v1h-1zM165 321h1v1h-1zM165 322h1v1h-1zM165 323h1v1h-1zM166 126h1v1h-1zM166 127h1v1h-1zM166 128h1v1h-1zM166 129h1v1h-1zM166 318h1v1h-1zM166 319h1v1h-1zM166 320h1v1h-1zM167 130h1v1h-1zM167 131h1v1h-1zM167 132h1v1h-1zM167 315h1v1h-1zM167 316h1v1h-1zM167 317h1v1h-1zM168 133h1v1h-1zM168 134h1v1h-1zM168 313h1v1h-1zM168 314h1v1h-1zM176 121h1v1h-1zM176 122h1v1h-1zM176 123h1v1h-1zM177 124h1v1h-1zM177 125h1v1h-1zM177 126h1v1h-1zM177 127h1v1h-1zM177 128h1v1h-1zM178 129h1v1h-1zM178 130h1v1h-1zM178 131h1v1h-1zM188 119h1v1h-1zM188 120h1v1h-1zM188 121h1v1h-1zM188 122h1v1h-1zM188 123h1v1h-1zM188 124h1v1h-1zM189 125h1v1h-1zM189 126h1v1h-1zM189 127h1v1h-1zM189 128h1v1h-1zM189 129h1v1h-1zM200 114h1v1h-1zM200 115h1v1h-1zM200 116h1v1h-1zM200 117h1v1h-1zM200 118h1v1h-1zM200 119h1v1h-1zM200 120h1v1h-1zM200 121h1v1h-1zM200 122h1v1h-1zM200 123h1v1h-1zM200 124h1v1h-1zM200 125h1v1h-1zM200 126h1v1h-1zM200 127h1v1h-1zM200 128h1v1h-1zM200 129h1v1h-1zM200 130h1v1h-1zM200 131h1v1h-1zM200 132h1v1h-1zM200 133h1v1h-1zM211 125h1v1h-1zM211 126h1v1h-1zM211 127h1v1h-1zM211 128h1v1h-1zM211 129h1v1h-1zM212 119h1v1h-1zM212 120h1v1h-1zM212 121h1v1h-1zM212 122h1v1h-1zM212 123h1v1h-1zM212 124h1v1h-1zM222 129h1v1h-1zM222 130h1v1h-1zM222 131h1v1h-1zM223 124h1v1h-1zM223 125h1v1h-1zM223 126h1v1h-1zM223 127h1v1h-1zM223 128h1v1h-1zM224 121h1v1h-1zM224 122h1v1h-1zM224 123h1v1h-1zM232 133h1v1h-1zM232 134h1v1h-1zM232 313h1v1h-1zM232 314h1v1h-1zM233 130h1v1h-1zM233 131h1v1h-1zM233 132h1v1h-1zM233 315h1v1h-1zM233 316h1v1h-1zM233 317h1v1h-1zM234 126h1v1h-1zM234 127h1v1h-1zM234 128h1v1h-1zM234 129h1v1h-1zM234 318h1v1h-1zM234 319h1v1h-1zM234 320h1v1h-1zM235 124h1v1h-1zM235 125h1v1h-1zM235 321h1v1h-1zM235 322h1v1h-1zM235 323h1v1h-1zM236 324h1v1h-1zM236 325h1v1h-1zM236 326h1v1h-1zM237 327h1v1h-1zM237 328h1v1h-1zM237 329h1v1h-1zM238 330h1v1h-1zM238 331h1v1h-1zM242 137h1v1h-1zM242 138h1v1h-1zM243 135h1v1h-1zM243 136h1v1h-1zM243 313h1v1h-1zM244 133h1v1h-1zM244 134h1v1h-1zM244 314h1v1h-1zM244 315h1v1h-1zM245 131h1v1h-1zM245 132h1v1h-1zM245 316h1v1h-1zM245 317h1v1h-1zM246 129h1v1h-1zM246 130h1v1h-1zM246 318h1v1h-1zM246 319h1v1h-1zM247 320h1v1h-1zM247 321h1v1h-1zM248 322h1v1h-1zM249 147h1v1h-1zM250 145h1v1h-1zM250 146h1v1h-1zM251 144h1v1h-1zM252 142h1v1h-1zM252 143h1v1h-1zM253 140h1v1h-1zM253 141h1v1h-1zM253 308h1v1h-1zM254 139h1v1h-1zM254 309h1v1h-1zM254 310h1v1h-1zM255 137h1v1h-1zM255 138h1v1h-1zM255 311h1v1h-1zM256 136h1v1h-1zM256 312h1v1h-1zM256 313h1v1h-1zM257 134h1v1h-1zM257 135h1v1h-1zM257 314h1v1h-1zM257 315h1v1h-1zM258 132h1v1h-1zM258 133h1v1h-1zM258 316h1v1h-1zM259 131h1v1h-1zM261 150h1v1h-1zM262 149h1v1h-1zM262 302h1v1h-1zM263 147h1v1h-1zM263 148h1v1h-1zM263 303h1v1h-1zM264 146h1v1h-1zM264 304h1v1h-1zM265 145h1v1h-1zM265 305h1v1h-1zM265 306h1v1h-1zM266 143h1v1h-1zM266 144h1v1h-1zM266 307h1v1h-1zM267 142h1v1h-1zM267 308h1v1h-1zM268 309h1v1h-1zM269 157h1v1h-1zM270 156h1v1h-1zM270 294h1v1h-1zM271 155h1v1h-1zM271 295h1v1h-1zM272 154h1v1h-1zM272 296h1v1h-1zM273 153h1v1h-1zM273 283h1v1h-1zM273 297h1v1h-1zM274 152h1v1h-1zM274 284h1v1h-1zM274 298h1v1h-1zM275 151h1v1h-1zM275 285h1v1h-1zM275 299h1v1h-1zM276 150h1v1h-1zM276 165h1v1h-1zM276 285h1v1h-1zM276 300h1v1h-1zM277 164h1v1h-1zM277 286h1v1h-1zM277 301h1v1h-1zM278 163h1v1h-1zM278 287h1v1h-1zM279 163h1v1h-1zM279 288h1v1h-1zM280 162h1v1h-1zM280 289h1v1h-1zM281 161h1v1h-1zM281 289h1v1h-1zM282 160h1v1h-1zM282 174h1v1h-1zM282 290h1v1h-1zM283 160h1v1h-1zM283 173h1v1h-1zM283 277h1v1h-1zM283 291h1v1h-1zM284 159h1v1h-1zM284 173h1v1h-1zM284 185h1v1h-1zM284 278h1v1h-1zM284 292h1v1h-1zM285 172h1v1h-1zM285 185h1v1h-1zM285 278h1v1h-1zM285 293h1v1h-1zM286 171h1v1h-1zM286 184h1v1h-1zM286 279h1v1h-1zM286 293h1v1h-1zM287 171h1v1h-1zM287 184h1v1h-1zM287 279h1v1h-1zM287 294h1v1h-1zM288 170h1v1h-1zM288 183h1v1h-1zM288 268h1v1h-1zM288 280h1v1h-1zM288 295h1v1h-1zM289 169h1v1h-1zM289 183h1v1h-1zM289 268h1v1h-1zM289 280h1v1h-1zM290 169h1v1h-1zM290 182h1v1h-1zM290 269h1v1h-1zM290 281h1v1h-1zM291 168h1v1h-1zM291 182h1v1h-1zM291 269h1v1h-1zM291 281h1v1h-1zM292 181h1v1h-1zM292 193h1v1h-1zM292 236h1v1h-1zM292 257h1v1h-1zM292 270h1v1h-1zM292 282h1v1h-1zM293 181h1v1h-1zM293 193h1v1h-1zM293 236h1v1h-1zM293 257h1v1h-1zM293 270h1v1h-1zM294 180h1v1h-1zM294 192h1v1h-1zM294 236h1v1h-1zM294 258h1v1h-1zM294 271h1v1h-1zM295 180h1v1h-1zM295 192h1v1h-1zM295 204h1v1h-1zM295 236h1v1h-1zM295 247h1v1h-1zM295 258h1v1h-1zM295 271h1v1h-1zM296 179h1v1h-1zM296 192h1v1h-1zM296 204h1v1h-1zM296 236h1v1h-1zM296 247h1v1h-1zM296 259h1v1h-1zM296 272h1v1h-1zM297 179h1v1h-1zM297 191h1v1h-1zM297 203h1v1h-1zM297 214h1v1h-1zM297 225h1v1h-1zM297 237h1v1h-1zM297 247h1v1h-1zM297 259h1v1h-1zM297 272h1v1h-1zM298 178h1v1h-1zM298 191h1v1h-1zM298 203h1v1h-1zM298 214h1v1h-1zM298 225h1v1h-1zM298 237h1v1h-1zM298 248h1v1h-1zM298 259h1v1h-1zM299 178h1v1h-1zM299 191h1v1h-1zM299 203h1v1h-1zM299 214h1v1h-1zM299 225h1v1h-1zM299 237h1v1h-1zM299 248h1v1h-1zM299 260h1v1h-1zM300 177h1v1h-1zM300 190h1v1h-1zM300 202h1v1h-1zM300 214h1v1h-1zM300 225h1v1h-1zM300 237h1v1h-1zM300 248h1v1h-1zM300 260h1v1h-1zM301 177h1v1h-1zM301 190h1v1h-1zM301 202h1v1h-1zM301 214h1v1h-1zM301 225h1v1h-1zM301 237h1v1h-1zM301 248h1v1h-1zM301 261h1v1h-1zM302 202h1v1h-1zM302 213h1v1h-1zM302 225h1v1h-1zM302 237h1v1h-1zM302 248h1v1h-1zM302 261h1v1h-1zM303 202h1v1h-1zM303 213h1v1h-1zM303 225h1v1h-1zM303 237h1v1h-1zM303 249h1v1h-1zM304 201h1v1h-1zM304 213h1v1h-1zM304 225h1v1h-1zM304 237h1v1h-1zM304 249h1v1h-1zM305 201h1v1h-1zM305 213h1v1h-1zM305 225h1v1h-1zM305 237h1v1h-1zM305 249h1v1h-1zM306 213h1v1h-1zM306 225h1v1h-1zM306 237h1v1h-1zM307 213h1v1h-1zM307 225h1v1h-1zM307 238h1v1h-1zM308 238h1v1h-1zM309 238h1v1h-1zM310 238h1v1h-1zM311 238h1v1h-1z" fill="#000" shape-rendering="crispEdges"/>
<text transform="translate(169.7,311.2) scale(0.85,1)" text-anchor="middle" font-family="Liberation Sans" font-size="15" fill="#000">0</text>
<text transform="translate(136.8,284.9) scale(0.85,1)" text-anchor="middle" font-family="Liberation Sans" font-size="15" fill="#000">10</text>
<text transform="translate(118.9,243.3) scale(0.85,1)" text-anchor="middle" font-family="Liberation Sans" font-size="15" fill="#000">20</text>
<text transform="translate(126.0,196.7) scale(0.85,1)" text-anchor="middle" font-family="Liberation Sans" font-size="15" fill="#000">30</text>
<text transform="translate(156.2,162.9) scale(0.85,1)" text-anchor="middle" font-family="Liberation Sans" font-size="15" fill="#000">40</text>
<text transform="translate(200.9,150.8) scale(0.85,1)" text-anchor="middle" font-family="Liberation Sans" font-size="15" fill="#000">50</text>
<text transform="translate(244.8,163.8) scale(0.85,1)" text-anchor="middle" font-family="Liberation Sans" font-size="15" fill="#000">60</text>
<text transform="translate(274.9,198.1) scale(0.85,1)" text-anchor="middle" font-family="Liberation Sans" font-size="15" fill="#000">70</text>
<text transform="translate(281.0,243.3) scale(0.85,1)" text-anchor="middle" font-family="Liberation Sans" font-size="15" fill="#000">80</text>
<text transform="translate(263.7,283.6) scale(0.85,1)" text-anchor="middle" font-family="Liberation Sans" font-size="15" fill="#000">90</text>
<text transform="translate(233.4,310.4) scale(0.85,1)" text-anchor="middle" font-family="Liberation Sans" font-size="15" fill="#000">100</text>
<rect x="170.5" y="266.5" width="59" height="29" fill="#3C0050" stroke="#000" stroke-width="1"/>
<text x="199.8" y="291.5" text-anchor="middle" font-family="Liberation Serif" font-size="30" fill="#FFFFFF" stroke="#FFFFFF" stroke-width="0.5">60</text>
<path d="M204.75 228.97 L240.95 161.97 L239.60 161.12 L195.25 223.03Z" fill="#FF8000" stroke="#000" stroke-width="1"/>
<circle cx="200" cy="226" r="11.5" fill="#FF8000" stroke="#000" stroke-width="1"/>
<path d="M196.5 223L204.5 230M204.5 223L196.5 230" stroke="#FFFFFF" stroke-width="2.4"/>
<path d="M196.5 223L204.5 230M204.5 223L196.5 230" stroke="#2040FF" stroke-width="1.1"/>
<g shape-rendering="crispEdges">
<rect x="424" y="142" width="69" height="279" fill="#ECEFF5" />
<rect x="420" y="138" width="69" height="279" fill="#FFFFFF" />
<rect x="420" y="138" width="69" height="1" fill="#D4D0C8" />
<rect x="420" y="138" width="1" height="279" fill="#D4D0C8" />
<rect x="487" y="138" width="1" height="278" fill="#808080" />
<rect x="420" y="415" width="68" height="1" fill="#808080" />
<rect x="488" y="137" width="1" height="280" fill="#000000" />
<rect x="420" y="416" width="69" height="1" fill="#000000" />
</g>
<g shape-rendering="crispEdges"><rect x="444" y="412" width="20" height="1" fill="#000"/><rect x="449" y="409" width="10" height="1" fill="#000"/><rect x="449" y="407" width="10" height="1" fill="#000"/><rect x="449" y="404" width="10" height="1" fill="#000"/><rect x="449" y="401" width="10" height="1" fill="#000"/><rect x="449" y="398" width="10" height="1" fill="#000"/><rect x="449" y="396" width="10" height="1" fill="#000"/><rect x="449" y="393" width="10" height="1" fill="#000"/><rect x="449" y="390" width="10" height="1" fill="#000"/><rect x="449" y="388" width="10" height="1" fill="#000"/><rect x="444" y="385" width="20" height="1" fill="#000"/><rect x="449" y="382" width="10" height="1" fill="#000"/><rect x="449" y="380" width="10" height="1" fill="#000"/><rect x="449" y="377" width="10" height="1" fill="#000"/><rect x="449" y="374" width="10" height="1" fill="#000"/><rect x="449" y="372" width="10" height="1" fill="#000"/><rect x="449" y="369" width="10" height="1" fill="#000"/><rect x="449" y="366" width="10" height="1" fill="#000"/><rect x="449" y="363" width="10" height="1" fill="#000"/><rect x="449" y="361" width="10" height="1" fill="#000"/><rect x="444" y="358" width="20" height="1" fill="#000"/><rect x="449" y="355" width="10" height="1" fill="#000"/><rect x="449" y="353" width="10" height="1" fill="#000"/><rect x="449" y="350" width="10" height="1" fill="#000"/><rect x="449" y="347" width="10" height="1" fill="#000"/><rect x="449" y="344" width="10" height="1" fill="#000"/><rect x="449" y="342" width="10" height="1" fill="#000"/><rect x="449" y="339" width="10" height="1" fill="#000"/><rect x="449" y="336" width="10" height="1" fill="#000"/><rect x="449" y="334" width="10" height="1" fill="#000"/><rect x="444" y="331" width="20" height="1" fill="#000"/><rect x="449" y="328" width="10" height="1" fill="#000"/><rect x="449" y="326" width="10" height="1" fill="#000"/><rect x="449" y="323" width="10" height="1" fill="#000"/><rect x="449" y="320" width="10" height="1" fill="#000"/><rect x="449" y="318" width="10" height="1" fill="#000"/><rect x="449" y="315" width="10" height="1" fill="#000"/><rect x="449" y="312" width="10" height="1" fill="#000"/><rect x="449" y="309" width="10" height="1" fill="#000"/><rect x="449" y="307" width="10" height="1" fill="#000"/><rect x="444" y="304" width="20" height="1" fill="#000"/><rect x="449" y="301" width="10" height="1" fill="#000"/><rect x="449" y="299" width="10" height="1" fill="#000"/><rect x="449" y="296" width="10" height="1" fill="#000"/><rect x="449" y="293" width="10" height="1" fill="#000"/><rect x="449" y="290" width="10" height="1" fill="#000"/><rect x="449" y="288" width="10" height="1" fill="#000"/><rect x="449" y="285" width="10" height="1" fill="#000"/><rect x="449" y="282" width="10" height="1" fill="#000"/><rect x="449" y="280" width="10" height="1" fill="#000"/><rect x="444" y="277" width="20" height="1" fill="#000"/><rect x="449" y="274" width="10" height="1" fill="#000"/><rect x="449" y="272" width="10" height="1" fill="#000"/><rect x="449" y="269" width="10" height="1" fill="#000"/><rect x="449" y="266" width="10" height="1" fill="#000"/><rect x="449" y="264" width="10" height="1" fill="#000"/><rect x="449" y="261" width="10" height="1" fill="#000"/><rect x="449" y="258" width="10" height="1" fill="#000"/><rect x="449" y="255" width="10" height="1" fill="#000"/><rect x="449" y="253" width="10" height="1" fill="#000"/><rect x="444" y="250" width="20" height="1" fill="#000"/><rect x="449" y="247" width="10" height="1" fill="#000"/><rect x="449" y="245" width="10" height="1" fill="#000"/><rect x="449" y="242" width="10" height="1" fill="#000"/><rect x="449" y="239" width="10" height="1" fill="#000"/><rect x="449" y="236" width="10" height="1" fill="#000"/><rect x="449" y="234" width="10" height="1" fill="#000"/><rect x="449" y="231" width="10" height="1" fill="#000"/><rect x="449" y="228" width="10" height="1" fill="#000"/><rect x="449" y="226" width="10" height="1" fill="#000"/><rect x="444" y="223" width="20" height="1" fill="#000"/><rect x="449" y="220" width="10" height="1" fill="#000"/><rect x="449" y="218" width="10" height="1" fill="#000"/><rect x="449" y="215" width="10" height="1" fill="#000"/><rect x="449" y="212" width="10" height="1" fill="#000"/><rect x="449" y="210" width="10" height="1" fill="#000"/><rect x="449" y="207" width="10" height="1" fill="#000"/><rect x="449" y="204" width="10" height="1" fill="#000"/><rect x="449" y="201" width="10" height="1" fill="#000"/><rect x="449" y="199" width="10" height="1" fill="#000"/><rect x="444" y="196" width="20" height="1" fill="#000"/><rect x="449" y="193" width="10" height="1" fill="#000"/><rect x="449" y="191" width="10" height="1" fill="#000"/><rect x="449" y="188" width="10" height="1" fill="#000"/><rect x="449" y="185" width="10" height="1" fill="#000"/><rect x="449" y="182" width="10" height="1" fill="#000"/><rect x="449" y="180" width="10" height="1" fill="#000"/><rect x="449" y="177" width="10" height="1" fill="#000"/><rect x="449" y="174" width="10" height="1" fill="#000"/><rect x="449" y="172" width="10" height="1" fill="#000"/><rect x="444" y="169" width="20" height="1" fill="#000"/><rect x="449" y="166" width="10" height="1" fill="#000"/><rect x="449" y="164" width="10" height="1" fill="#000"/><rect x="449" y="161" width="10" height="1" fill="#000"/><rect x="449" y="158" width="10" height="1" fill="#000"/><rect x="449" y="156" width="10" height="1" fill="#000"/><rect x="449" y="153" width="10" height="1" fill="#000"/><rect x="449" y="150" width="10" height="1" fill="#000"/><rect x="449" y="147" width="10" height="1" fill="#000"/><rect x="449" y="145" width="10" height="1" fill="#000"/><rect x="444" y="142" width="20" height="1" fill="#000"/>
<rect x="450" y="250" width="7" height="163" fill="#000000" />
<rect x="451" y="251" width="5" height="160" fill="#FF0000" />
</g>
<text transform="translate(434.8,427.0) scale(0.86,1)" font-family="Liberation Serif" font-size="16" fill="#000">0</text>
<text transform="translate(434.8,400.0) scale(0.86,1)" font-family="Liberation Serif" font-size="16" fill="#000">10</text>
<text transform="translate(434.8,373.0) scale(0.86,1)" font-family="Liberation Serif" font-size="16" fill="#000">20</text>
<text transform="translate(434.8,346.0) scale(0.86,1)" font-family="Liberation Serif" font-size="16" fill="#000">30</text>
<text transform="translate(434.8,319.0) scale(0.86,1)" font-family="Liberation Serif" font-size="16" fill="#000">40</text>
<text transform="translate(434.8,292.0) scale(0.86,1)" font-family="Liberation Serif" font-size="16" fill="#000">50</text>
<text transform="translate(434.8,265.0) scale(0.86,1)" font-family="Liberation Serif" font-size="16" fill="#000">60</text>
<text transform="translate(434.8,238.0) scale(0.86,1)" font-family="Liberation Serif" font-size="16" fill="#000">70</text>
<text transform="translate(434.8,211.0) scale(0.86,1)" font-family="Liberation Serif" font-size="16" fill="#000">80</text>
<text transform="translate(434.8,184.0) scale(0.86,1)" font-family="Liberation Serif" font-size="16" fill="#000">90</text>
<text transform="translate(434.8,157.0) scale(0.86,1)" font-family="Liberation Serif" font-size="16" fill="#000">100</text>
<path d="M60.65 318.35 L65.49 319.16 L69.34 320.97 L72.98 322.99 L76.51 325.12 L79.96 327.33 L83.35 329.59 L86.69 331.91 L90.00 334.26 L93.27 336.64 L96.52 339.05 L99.74 341.49 L102.94 343.95 L106.11 346.42 L109.28 348.92 L112.42 351.43 L115.55 353.96 L118.66 356.50 L121.76 359.06 L124.85 361.63 L127.93 364.21 L130.99 366.80 L134.04 369.41 L137.08 372.02 L140.12 374.65 L143.14 377.28 L146.15 379.93 L149.15 382.58 L152.15 385.24 L155.13 387.92 L158.11 390.60 L161.08 393.28 L164.04 395.98 L166.99 398.69 L169.93 401.40 L172.87 404.12 L175.80 406.85 L178.72 409.58 L181.64 412.32 L184.55 415.07 L187.45 417.83 L190.34 420.59 L193.22 423.36 L196.10 426.14 L198.98 428.92 L201.84 431.72 L204.70 434.51 L207.55 437.32 L210.40 440.13 L213.24 442.95 L216.07 445.77 L218.89 448.61 L221.71 451.44 L224.52 454.29 L227.33 457.14 L230.13 460.00 L232.92 462.87 L235.70 465.74 L238.48 468.62 L241.25 471.50 L244.01 474.40 L246.77 477.30 L249.52 480.20 L252.26 483.12 L255.00 486.04 L257.72 488.97 L260.44 491.91 L263.16 494.85 L265.86 497.80 L268.56 500.76 L271.25 503.73 L273.93 506.71 L276.60 509.70 L279.26 512.69 L281.91 515.69 L284.56 518.70 L287.19 521.73 L289.82 524.76 L292.43 527.80 L295.04 530.85 L297.63 533.92 L300.21 536.99 L302.78 540.08 L305.34 543.18 L307.88 546.29 L310.41 549.42 L312.92 552.57 L315.42 555.73 L317.90 558.91 L320.35 562.11 L322.79 565.33 L325.20 568.57 L327.58 571.85 L329.94 575.15 L332.25 578.50 L334.52 581.89 L336.73 585.33 L338.86 588.86 L340.87 592.50 L342.68 596.35 L343.49 601.20 L343.06 601.62 L338.22 600.81 L334.38 598.99 L330.74 596.97 L327.22 594.84 L323.78 592.63 L320.39 590.35 L317.05 588.04 L313.75 585.68 L310.48 583.29 L307.24 580.88 L304.02 578.44 L300.83 575.98 L297.65 573.49 L294.49 570.99 L291.35 568.48 L288.23 565.95 L285.12 563.40 L282.02 560.84 L278.94 558.26 L275.87 555.68 L272.81 553.08 L269.76 550.47 L266.72 547.85 L263.70 545.22 L260.68 542.58 L257.67 539.94 L254.67 537.28 L251.68 534.61 L248.70 531.93 L245.73 529.25 L242.77 526.56 L239.81 523.86 L236.86 521.15 L233.92 518.43 L230.99 515.71 L228.06 512.98 L225.15 510.24 L222.23 507.49 L219.33 504.74 L216.44 501.98 L213.55 499.21 L210.66 496.43 L207.79 493.65 L204.92 490.86 L202.06 488.07 L199.21 485.26 L196.36 482.46 L193.52 479.64 L190.68 476.82 L187.85 473.99 L185.03 471.15 L182.22 468.31 L179.41 465.46 L176.61 462.60 L173.82 459.74 L171.03 456.87 L168.25 453.99 L165.48 451.11 L162.71 448.22 L159.95 445.32 L157.20 442.42 L154.45 439.51 L151.72 436.59 L148.99 433.66 L146.26 430.73 L143.55 427.79 L140.84 424.84 L138.14 421.88 L135.45 418.92 L132.76 415.94 L130.09 412.96 L127.42 409.97 L124.76 406.98 L122.11 403.97 L119.47 400.95 L116.84 397.93 L114.22 394.89 L111.61 391.84 L109.01 388.79 L106.42 385.72 L103.84 382.64 L101.28 379.55 L98.72 376.44 L96.19 373.32 L93.66 370.19 L91.15 367.04 L88.66 363.88 L86.19 360.69 L83.74 357.49 L81.30 354.26 L78.90 351.01 L76.52 347.74 L74.17 344.43 L71.86 341.08 L69.60 337.69 L67.39 334.23 L65.27 330.70 L63.26 327.06 L61.45 323.20 L60.65 318.35Z" fill="#FDEBDF" stroke="#000" stroke-width="1"/>
<path d="M53 325h1v1h-1zM54 324h1v1h-1zM55 323h1v1h-1zM56 322h1v1h-1zM57 321h1v1h-1zM58 320h1v1h-1zM59 319h1v1h-1zM60 318h1v1h-1zM60 324h1v1h-1zM61 317h1v1h-1zM61 323h1v1h-1zM62 316h1v1h-1zM62 322h1v1h-1zM62 327h1v1h-1zM63 315h1v1h-1zM63 321h1v1h-1zM63 326h1v1h-1zM64 314h1v1h-1zM64 320h1v1h-1zM64 325h1v1h-1zM65 313h1v1h-1zM65 319h1v1h-1zM65 324h1v1h-1zM65 330h1v1h-1zM66 312h1v1h-1zM66 318h1v1h-1zM66 323h1v1h-1zM66 329h1v1h-1zM67 311h1v1h-1zM67 317h1v1h-1zM67 322h1v1h-1zM67 328h1v1h-1zM68 310h1v1h-1zM68 321h1v1h-1zM68 327h1v1h-1zM68 332h1v1h-1zM69 320h1v1h-1zM69 326h1v1h-1zM69 331h1v1h-1zM70 319h1v1h-1zM70 325h1v1h-1zM70 330h1v1h-1zM71 324h1v1h-1zM71 329h1v1h-1zM71 335h1v1h-1zM72 323h1v1h-1zM72 328h1v1h-1zM72 334h1v1h-1zM73 322h1v1h-1zM73 327h1v1h-1zM73 333h1v1h-1zM74 326h1v1h-1zM74 332h1v1h-1zM74 338h1v1h-1zM75 325h1v1h-1zM75 331h1v1h-1zM75 337h1v1h-1zM76 330h1v1h-1zM76 336h1v1h-1zM76 341h1v1h-1zM77 329h1v1h-1zM77 335h1v1h-1zM77 340h1v1h-1zM78 328h1v1h-1zM78 334h1v1h-1zM78 339h1v1h-1zM79 333h1v1h-1zM79 338h1v1h-1zM79 344h1v1h-1zM80 332h1v1h-1zM80 337h1v1h-1zM80 343h1v1h-1zM81 331h1v1h-1zM81 336h1v1h-1zM81 342h1v1h-1zM81 353h1v1h-1zM82 335h1v1h-1zM82 341h1v1h-1zM82 346h1v1h-1zM82 352h1v1h-1zM83 334h1v1h-1zM83 340h1v1h-1zM83 345h1v1h-1zM83 351h1v1h-1zM84 333h1v1h-1zM84 339h1v1h-1zM84 344h1v1h-1zM84 350h1v1h-1zM85 338h1v1h-1zM85 343h1v1h-1zM85 349h1v1h-1zM86 337h1v1h-1zM86 342h1v1h-1zM86 348h1v1h-1zM87 336h1v1h-1zM87 341h1v1h-1zM87 347h1v1h-1zM88 340h1v1h-1zM88 346h1v1h-1zM88 352h1v1h-1zM89 339h1v1h-1zM89 345h1v1h-1zM89 351h1v1h-1zM90 344h1v1h-1zM90 350h1v1h-1zM91 343h1v1h-1zM91 349h1v1h-1zM91 355h1v1h-1zM92 342h1v1h-1zM92 348h1v1h-1zM92 354h1v1h-1zM93 341h1v1h-1zM93 347h1v1h-1zM93 353h1v1h-1zM93 358h1v1h-1zM94 340h1v1h-1zM94 346h1v1h-1zM94 352h1v1h-1zM94 357h1v1h-1zM95 339h1v1h-1zM95 345h1v1h-1zM95 351h1v1h-1zM95 356h1v1h-1zM96 338h1v1h-1zM96 350h1v1h-1zM96 355h1v1h-1zM96 360h1v1h-1zM97 349h1v1h-1zM97 354h1v1h-1zM97 359h1v1h-1zM98 348h1v1h-1zM98 353h1v1h-1zM98 358h1v1h-1zM99 352h1v1h-1zM99 357h1v1h-1zM99 363h1v1h-1zM100 351h1v1h-1zM100 356h1v1h-1zM100 362h1v1h-1zM101 350h1v1h-1zM101 355h1v1h-1zM101 361h1v1h-1zM102 354h1v1h-1zM102 360h1v1h-1zM102 366h1v1h-1zM103 353h1v1h-1zM103 359h1v1h-1zM103 365h1v1h-1zM104 358h1v1h-1zM104 364h1v1h-1zM105 357h1v1h-1zM105 363h1v1h-1zM105 369h1v1h-1zM106 356h1v1h-1zM106 362h1v1h-1zM106 368h1v1h-1zM107 361h1v1h-1zM107 367h1v1h-1zM107 372h1v1h-1zM108 360h1v1h-1zM108 366h1v1h-1zM108 371h1v1h-1zM109 359h1v1h-1zM109 365h1v1h-1zM109 370h1v1h-1zM109 381h1v1h-1zM110 364h1v1h-1zM110 369h1v1h-1zM110 375h1v1h-1zM110 380h1v1h-1zM111 363h1v1h-1zM111 368h1v1h-1zM111 374h1v1h-1zM111 379h1v1h-1zM112 362h1v1h-1zM112 367h1v1h-1zM112 373h1v1h-1zM112 378h1v1h-1zM113 366h1v1h-1zM113 372h1v1h-1zM113 377h1v1h-1zM114 365h1v1h-1zM114 371h1v1h-1zM114 376h1v1h-1zM115 364h1v1h-1zM115 370h1v1h-1zM115 375h1v1h-1zM116 369h1v1h-1zM116 374h1v1h-1zM116 380h1v1h-1zM117 368h1v1h-1zM117 373h1v1h-1zM117 379h1v1h-1zM118 367h1v1h-1zM118 372h1v1h-1zM118 378h1v1h-1zM119 371h1v1h-1zM119 377h1v1h-1zM119 383h1v1h-1zM120 370h1v1h-1zM120 376h1v1h-1zM120 382h1v1h-1zM121 369h1v1h-1zM121 375h1v1h-1zM121 381h1v1h-1zM121 386h1v1h-1zM122 368h1v1h-1zM122 374h1v1h-1zM122 380h1v1h-1zM122 385h1v1h-1zM123 367h1v1h-1zM123 373h1v1h-1zM123 379h1v1h-1zM123 384h1v1h-1zM124 366h1v1h-1zM124 378h1v1h-1zM124 383h1v1h-1zM124 389h1v1h-1zM125 377h1v1h-1zM125 382h1v1h-1zM125 388h1v1h-1zM126 376h1v1h-1zM126 381h1v1h-1zM126 387h1v1h-1zM127 380h1v1h-1zM127 386h1v1h-1zM127 391h1v1h-1zM128 379h1v1h-1zM128 385h1v1h-1zM128 390h1v1h-1zM129 378h1v1h-1zM129 384h1v1h-1zM129 389h1v1h-1zM130 383h1v1h-1zM130 388h1v1h-1zM130 394h1v1h-1zM131 382h1v1h-1zM131 387h1v1h-1zM131 393h1v1h-1zM132 381h1v1h-1zM132 386h1v1h-1zM132 392h1v1h-1zM133 385h1v1h-1zM133 391h1v1h-1zM133 397h1v1h-1zM134 384h1v1h-1zM134 390h1v1h-1zM134 396h1v1h-1zM135 389h1v1h-1zM135 395h1v1h-1zM135 400h1v1h-1zM136 388h1v1h-1zM136 394h1v1h-1zM136 399h1v1h-1zM137 387h1v1h-1zM137 393h1v1h-1zM137 398h1v1h-1zM137 409h1v1h-1zM138 392h1v1h-1zM138 397h1v1h-1zM138 403h1v1h-1zM138 408h1v1h-1zM139 391h1v1h-1zM139 396h1v1h-1zM139 402h1v1h-1zM139 407h1v1h-1zM140 390h1v1h-1zM140 395h1v1h-1zM140 401h1v1h-1zM140 406h1v1h-1zM141 394h1v1h-1zM141 400h1v1h-1zM141 405h1v1h-1zM142 393h1v1h-1zM142 399h1v1h-1zM142 404h1v1h-1zM143 392h1v1h-1zM143 398h1v1h-1zM143 403h1v1h-1zM144 397h1v1h-1zM144 402h1v1h-1zM144 408h1v1h-1zM145 396h1v1h-1zM145 401h1v1h-1zM145 407h1v1h-1zM146 395h1v1h-1zM146 400h1v1h-1zM146 406h1v1h-1zM147 399h1v1h-1zM147 405h1v1h-1zM147 411h1v1h-1zM148 398h1v1h-1zM148 404h1v1h-1zM148 410h1v1h-1zM149 397h1v1h-1zM149 403h1v1h-1zM149 409h1v1h-1zM149 414h1v1h-1zM150 396h1v1h-1zM150 402h1v1h-1zM150 408h1v1h-1zM150 413h1v1h-1zM151 395h1v1h-1zM151 401h1v1h-1zM151 407h1v1h-1zM151 412h1v1h-1zM152 394h1v1h-1zM152 406h1v1h-1zM152 411h1v1h-1zM152 417h1v1h-1zM153 405h1v1h-1zM153 410h1v1h-1zM153 416h1v1h-1zM154 404h1v1h-1zM154 409h1v1h-1zM154 415h1v1h-1zM155 408h1v1h-1zM155 414h1v1h-1zM155 419h1v1h-1zM156 407h1v1h-1zM156 413h1v1h-1zM156 418h1v1h-1zM157 406h1v1h-1zM157 412h1v1h-1zM157 417h1v1h-1zM158 411h1v1h-1zM158 416h1v1h-1zM158 422h1v1h-1zM159 410h1v1h-1zM159 415h1v1h-1zM159 421h1v1h-1zM160 409h1v1h-1zM160 414h1v1h-1zM160 420h1v1h-1zM161 413h1v1h-1zM161 419h1v1h-1zM161 425h1v1h-1zM162 412h1v1h-1zM162 418h1v1h-1zM162 424h1v1h-1zM163 417h1v1h-1zM163 423h1v1h-1zM163 428h1v1h-1zM164 416h1v1h-1zM164 422h1v1h-1zM164 427h1v1h-1zM165 415h1v1h-1zM165 421h1v1h-1zM165 426h1v1h-1zM165 437h1v1h-1zM166 420h1v1h-1zM166 425h1v1h-1zM166 431h1v1h-1zM166 436h1v1h-1zM167 419h1v1h-1zM167 424h1v1h-1zM167 430h1v1h-1zM167 435h1v1h-1zM168 418h1v1h-1zM168 423h1v1h-1zM168 429h1v1h-1zM168 434h1v1h-1zM169 422h1v1h-1zM169 428h1v1h-1zM169 433h1v1h-1zM170 421h1v1h-1zM170 427h1v1h-1zM170 432h1v1h-1zM171 420h1v1h-1zM171 426h1v1h-1zM171 431h1v1h-1zM172 425h1v1h-1zM172 430h1v1h-1zM172 436h1v1h-1zM173 424h1v1h-1zM173 429h1v1h-1zM173 435h1v1h-1zM174 423h1v1h-1zM174 428h1v1h-1zM174 434h1v1h-1zM175 427h1v1h-1zM175 433h1v1h-1zM175 439h1v1h-1zM176 426h1v1h-1zM176 432h1v1h-1zM176 438h1v1h-1zM177 425h1v1h-1zM177 431h1v1h-1zM177 437h1v1h-1zM178 424h1v1h-1zM178 430h1v1h-1zM178 436h1v1h-1zM178 442h1v1h-1zM179 423h1v1h-1zM179 429h1v1h-1zM179 435h1v1h-1zM179 441h1v1h-1zM180 422h1v1h-1zM180 434h1v1h-1zM180 440h1v1h-1zM180 445h1v1h-1zM181 433h1v1h-1zM181 439h1v1h-1zM181 444h1v1h-1zM182 432h1v1h-1zM182 438h1v1h-1zM182 443h1v1h-1zM183 437h1v1h-1zM183 442h1v1h-1zM183 448h1v1h-1zM184 436h1v1h-1zM184 441h1v1h-1zM184 447h1v1h-1zM185 435h1v1h-1zM185 440h1v1h-1zM185 446h1v1h-1zM186 439h1v1h-1zM186 445h1v1h-1zM186 450h1v1h-1zM187 438h1v1h-1zM187 444h1v1h-1zM187 449h1v1h-1zM188 437h1v1h-1zM188 443h1v1h-1zM188 448h1v1h-1zM189 442h1v1h-1zM189 447h1v1h-1zM189 453h1v1h-1zM190 441h1v1h-1zM190 446h1v1h-1zM190 452h1v1h-1zM191 440h1v1h-1zM191 445h1v1h-1zM191 451h1v1h-1zM192 444h1v1h-1zM192 450h1v1h-1zM192 456h1v1h-1zM193 443h1v1h-1zM193 449h1v1h-1zM193 455h1v1h-1zM193 465h1v1h-1zM194 448h1v1h-1zM194 454h1v1h-1zM194 459h1v1h-1zM194 464h1v1h-1zM195 447h1v1h-1zM195 453h1v1h-1zM195 458h1v1h-1zM195 463h1v1h-1zM196 446h1v1h-1zM196 452h1v1h-1zM196 457h1v1h-1zM196 462h1v1h-1zM197 451h1v1h-1zM197 456h1v1h-1zM197 461h1v1h-1zM198 450h1v1h-1zM198 455h1v1h-1zM198 460h1v1h-1zM199 449h1v1h-1zM199 454h1v1h-1zM199 459h1v1h-1zM200 453h1v1h-1zM200 458h1v1h-1zM200 464h1v1h-1zM201 452h1v1h-1zM201 457h1v1h-1zM201 463h1v1h-1zM202 451h1v1h-1zM202 456h1v1h-1zM202 462h1v1h-1zM203 455h1v1h-1zM203 461h1v1h-1zM203 467h1v1h-1zM204 454h1v1h-1zM204 460h1v1h-1zM204 466h1v1h-1zM205 453h1v1h-1zM205 459h1v1h-1zM205 465h1v1h-1zM206 452h1v1h-1zM206 458h1v1h-1zM206 464h1v1h-1zM206 470h1v1h-1zM207 451h1v1h-1zM207 457h1v1h-1zM207 463h1v1h-1zM207 469h1v1h-1zM208 450h1v1h-1zM208 462h1v1h-1zM208 468h1v1h-1zM208 473h1v1h-1zM209 461h1v1h-1zM209 467h1v1h-1zM209 472h1v1h-1zM210 460h1v1h-1zM210 466h1v1h-1zM210 471h1v1h-1zM211 465h1v1h-1zM211 470h1v1h-1zM211 476h1v1h-1zM212 464h1v1h-1zM212 469h1v1h-1zM212 475h1v1h-1zM213 463h1v1h-1zM213 468h1v1h-1zM213 474h1v1h-1zM214 467h1v1h-1zM214 473h1v1h-1zM214 478h1v1h-1zM215 466h1v1h-1zM215 472h1v1h-1zM215 477h1v1h-1zM216 465h1v1h-1zM216 471h1v1h-1zM216 476h1v1h-1zM217 470h1v1h-1zM217 475h1v1h-1zM217 481h1v1h-1zM218 469h1v1h-1zM218 474h1v1h-1zM218 480h1v1h-1zM219 468h1v1h-1zM219 473h1v1h-1zM219 479h1v1h-1zM220 472h1v1h-1zM220 478h1v1h-1zM220 484h1v1h-1zM221 471h1v1h-1zM221 477h1v1h-1zM221 483h1v1h-1zM221 494h1v1h-1zM222 476h1v1h-1zM222 482h1v1h-1zM222 487h1v1h-1zM222 493h1v1h-1zM223 475h1v1h-1zM223 481h1v1h-1zM223 486h1v1h-1zM223 492h1v1h-1zM224 474h1v1h-1zM224 480h1v1h-1zM224 485h1v1h-1zM224 491h1v1h-1zM225 479h1v1h-1zM225 484h1v1h-1zM225 490h1v1h-1zM226 478h1v1h-1zM226 483h1v1h-1zM226 489h1v1h-1zM227 477h1v1h-1zM227 482h1v1h-1zM227 488h1v1h-1zM228 481h1v1h-1zM228 487h1v1h-1zM228 492h1v1h-1zM229 480h1v1h-1zM229 486h1v1h-1zM229 491h1v1h-1zM230 479h1v1h-1zM230 485h1v1h-1zM230 490h1v1h-1zM231 484h1v1h-1zM231 489h1v1h-1zM231 495h1v1h-1zM232 483h1v1h-1zM232 488h1v1h-1zM232 494h1v1h-1zM233 482h1v1h-1zM233 487h1v1h-1zM233 493h1v1h-1zM234 481h1v1h-1zM234 486h1v1h-1zM234 492h1v1h-1zM234 498h1v1h-1zM235 480h1v1h-1zM235 485h1v1h-1zM235 491h1v1h-1zM235 497h1v1h-1zM236 479h1v1h-1zM236 490h1v1h-1zM236 496h1v1h-1zM236 501h1v1h-1zM237 478h1v1h-1zM237 489h1v1h-1zM237 495h1v1h-1zM237 500h1v1h-1zM238 488h1v1h-1zM238 494h1v1h-1zM238 499h1v1h-1zM239 493h1v1h-1zM239 498h1v1h-1zM239 504h1v1h-1zM240 492h1v1h-1zM240 497h1v1h-1zM240 503h1v1h-1zM241 491h1v1h-1zM241 496h1v1h-1zM241 502h1v1h-1zM242 495h1v1h-1zM242 501h1v1h-1zM242 506h1v1h-1zM243 494h1v1h-1zM243 500h1v1h-1zM243 505h1v1h-1zM244 493h1v1h-1zM244 499h1v1h-1zM244 504h1v1h-1zM245 498h1v1h-1zM245 503h1v1h-1zM245 509h1v1h-1zM246 497h1v1h-1zM246 502h1v1h-1zM246 508h1v1h-1zM247 496h1v1h-1zM247 501h1v1h-1zM247 507h1v1h-1zM248 500h1v1h-1zM248 506h1v1h-1zM248 512h1v1h-1zM249 499h1v1h-1zM249 505h1v1h-1zM249 511h1v1h-1zM249 522h1v1h-1zM250 504h1v1h-1zM250 510h1v1h-1zM250 521h1v1h-1zM251 503h1v1h-1zM251 509h1v1h-1zM251 515h1v1h-1zM251 520h1v1h-1zM252 502h1v1h-1zM252 508h1v1h-1zM252 514h1v1h-1zM252 519h1v1h-1zM253 507h1v1h-1zM253 513h1v1h-1zM253 518h1v1h-1zM254 506h1v1h-1zM254 512h1v1h-1zM254 517h1v1h-1zM255 505h1v1h-1zM255 511h1v1h-1zM255 516h1v1h-1zM256 510h1v1h-1zM256 515h1v1h-1zM256 520h1v1h-1zM257 509h1v1h-1zM257 514h1v1h-1zM257 519h1v1h-1zM258 508h1v1h-1zM258 513h1v1h-1zM258 518h1v1h-1zM259 512h1v1h-1zM259 517h1v1h-1zM259 523h1v1h-1zM260 511h1v1h-1zM260 516h1v1h-1zM260 522h1v1h-1zM261 510h1v1h-1zM261 515h1v1h-1zM261 521h1v1h-1zM262 509h1v1h-1zM262 514h1v1h-1zM262 520h1v1h-1zM262 526h1v1h-1zM263 508h1v1h-1zM263 513h1v1h-1zM263 519h1v1h-1zM263 525h1v1h-1zM264 507h1v1h-1zM264 518h1v1h-1zM264 524h1v1h-1zM265 506h1v1h-1zM265 517h1v1h-1zM265 523h1v1h-1zM265 529h1v1h-1zM266 516h1v1h-1zM266 522h1v1h-1zM266 528h1v1h-1zM267 521h1v1h-1zM267 527h1v1h-1zM267 532h1v1h-1zM268 520h1v1h-1zM268 526h1v1h-1zM268 531h1v1h-1zM269 519h1v1h-1zM269 525h1v1h-1zM269 530h1v1h-1zM270 524h1v1h-1zM270 529h1v1h-1zM270 535h1v1h-1zM271 523h1v1h-1zM271 528h1v1h-1zM271 534h1v1h-1zM272 522h1v1h-1zM272 527h1v1h-1zM272 533h1v1h-1zM273 526h1v1h-1zM273 532h1v1h-1zM273 537h1v1h-1zM274 525h1v1h-1zM274 531h1v1h-1zM274 536h1v1h-1zM275 524h1v1h-1zM275 530h1v1h-1zM275 535h1v1h-1zM276 529h1v1h-1zM276 534h1v1h-1zM276 540h1v1h-1zM277 528h1v1h-1zM277 533h1v1h-1zM277 539h1v1h-1zM277 550h1v1h-1zM278 527h1v1h-1zM278 532h1v1h-1zM278 538h1v1h-1zM278 549h1v1h-1zM279 531h1v1h-1zM279 537h1v1h-1zM279 543h1v1h-1zM279 548h1v1h-1zM280 530h1v1h-1zM280 536h1v1h-1zM280 542h1v1h-1zM280 547h1v1h-1zM281 535h1v1h-1zM281 541h1v1h-1zM281 546h1v1h-1zM282 534h1v1h-1zM282 540h1v1h-1zM282 545h1v1h-1zM283 533h1v1h-1zM283 539h1v1h-1zM283 544h1v1h-1zM284 538h1v1h-1zM284 543h1v1h-1zM284 549h1v1h-1zM285 537h1v1h-1zM285 542h1v1h-1zM285 548h1v1h-1zM286 536h1v1h-1zM286 541h1v1h-1zM286 547h1v1h-1zM287 540h1v1h-1zM287 546h1v1h-1zM287 551h1v1h-1zM288 539h1v1h-1zM288 545h1v1h-1zM288 550h1v1h-1zM289 538h1v1h-1zM289 544h1v1h-1zM289 549h1v1h-1zM290 537h1v1h-1zM290 543h1v1h-1zM290 548h1v1h-1zM290 554h1v1h-1zM291 536h1v1h-1zM291 542h1v1h-1zM291 547h1v1h-1zM291 553h1v1h-1zM292 535h1v1h-1zM292 541h1v1h-1zM292 546h1v1h-1zM292 552h1v1h-1zM293 534h1v1h-1zM293 545h1v1h-1zM293 551h1v1h-1zM293 557h1v1h-1zM294 544h1v1h-1zM294 550h1v1h-1zM294 556h1v1h-1zM295 549h1v1h-1zM295 555h1v1h-1zM295 560h1v1h-1zM296 548h1v1h-1zM296 554h1v1h-1zM296 559h1v1h-1zM297 547h1v1h-1zM297 553h1v1h-1zM297 558h1v1h-1zM298 552h1v1h-1zM298 557h1v1h-1zM298 563h1v1h-1zM299 551h1v1h-1zM299 556h1v1h-1zM299 562h1v1h-1zM300 550h1v1h-1zM300 555h1v1h-1zM300 561h1v1h-1zM301 554h1v1h-1zM301 560h1v1h-1zM301 565h1v1h-1zM302 553h1v1h-1zM302 559h1v1h-1zM302 564h1v1h-1zM303 552h1v1h-1zM303 558h1v1h-1zM303 563h1v1h-1zM304 557h1v1h-1zM304 562h1v1h-1zM304 568h1v1h-1zM305 556h1v1h-1zM305 561h1v1h-1zM305 567h1v1h-1zM306 555h1v1h-1zM306 560h1v1h-1zM306 566h1v1h-1zM306 578h1v1h-1zM307 559h1v1h-1zM307 565h1v1h-1zM307 571h1v1h-1zM307 577h1v1h-1zM308 558h1v1h-1zM308 564h1v1h-1zM308 570h1v1h-1zM308 576h1v1h-1zM309 563h1v1h-1zM309 569h1v1h-1zM309 575h1v1h-1zM310 562h1v1h-1zM310 568h1v1h-1zM310 574h1v1h-1zM311 561h1v1h-1zM311 567h1v1h-1zM311 573h1v1h-1zM312 566h1v1h-1zM312 572h1v1h-1zM312 577h1v1h-1zM313 565h1v1h-1zM313 571h1v1h-1zM313 576h1v1h-1zM314 564h1v1h-1zM314 570h1v1h-1zM314 575h1v1h-1zM315 569h1v1h-1zM315 574h1v1h-1zM315 579h1v1h-1zM316 568h1v1h-1zM316 573h1v1h-1zM316 578h1v1h-1zM317 567h1v1h-1zM317 572h1v1h-1zM317 577h1v1h-1zM318 566h1v1h-1zM318 571h1v1h-1zM318 576h1v1h-1zM318 582h1v1h-1zM319 565h1v1h-1zM319 570h1v1h-1zM319 575h1v1h-1zM319 581h1v1h-1zM320 564h1v1h-1zM320 569h1v1h-1zM320 574h1v1h-1zM320 580h1v1h-1zM321 563h1v1h-1zM321 573h1v1h-1zM321 579h1v1h-1zM321 585h1v1h-1zM322 572h1v1h-1zM322 578h1v1h-1zM322 584h1v1h-1zM323 577h1v1h-1zM323 583h1v1h-1zM324 576h1v1h-1zM324 582h1v1h-1zM324 588h1v1h-1zM325 575h1v1h-1zM325 581h1v1h-1zM325 587h1v1h-1zM326 580h1v1h-1zM326 586h1v1h-1zM326 591h1v1h-1zM327 579h1v1h-1zM327 585h1v1h-1zM327 590h1v1h-1zM328 578h1v1h-1zM328 584h1v1h-1zM328 589h1v1h-1zM329 583h1v1h-1zM329 588h1v1h-1zM329 593h1v1h-1zM330 582h1v1h-1zM330 587h1v1h-1zM330 592h1v1h-1zM331 581h1v1h-1zM331 586h1v1h-1zM331 591h1v1h-1zM332 585h1v1h-1zM332 590h1v1h-1zM332 596h1v1h-1zM333 584h1v1h-1zM333 589h1v1h-1zM333 595h1v1h-1zM334 583h1v1h-1zM334 588h1v1h-1zM334 594h1v1h-1zM334 606h1v1h-1zM335 587h1v1h-1zM335 593h1v1h-1zM335 599h1v1h-1zM335 605h1v1h-1zM336 586h1v1h-1zM336 592h1v1h-1zM336 598h1v1h-1zM336 604h1v1h-1zM337 591h1v1h-1zM337 597h1v1h-1zM337 603h1v1h-1zM338 590h1v1h-1zM338 596h1v1h-1zM338 602h1v1h-1zM339 589h1v1h-1zM339 595h1v1h-1zM339 601h1v1h-1zM340 594h1v1h-1zM340 600h1v1h-1zM341 593h1v1h-1zM341 599h1v1h-1zM342 592h1v1h-1zM342 598h1v1h-1zM343 597h1v1h-1zM344 596h1v1h-1zM345 595h1v1h-1zM346 594h1v1h-1zM347 593h1v1h-1zM348 592h1v1h-1zM349 591h1v1h-1z" fill="#000" shape-rendering="crispEdges"/>
<text transform="translate(74.3,318.9) scale(0.85,1)" font-family="Liberation Sans" font-size="15" fill="#000">0</text>
<text transform="translate(102.4,347.0) scale(0.85,1)" font-family="Liberation Sans" font-size="15" fill="#000">10</text>
<text transform="translate(130.4,375.0) scale(0.85,1)" font-family="Liberation Sans" font-size="15" fill="#000">20</text>
<text transform="translate(158.5,403.1) scale(0.85,1)" font-family="Liberation Sans" font-size="15" fill="#000">30</text>
<text transform="translate(186.6,431.2) scale(0.85,1)" font-family="Liberation Sans" font-size="15" fill="#000">40</text>
<text transform="translate(214.7,459.3) scale(0.85,1)" font-family="Liberation Sans" font-size="15" fill="#000">50</text>
<text transform="translate(242.7,487.3) scale(0.85,1)" font-family="Liberation Sans" font-size="15" fill="#000">60</text>
<text transform="translate(270.8,515.4) scale(0.85,1)" font-family="Liberation Sans" font-size="15" fill="#000">70</text>
<text transform="translate(298.9,543.5) scale(0.85,1)" font-family="Liberation Sans" font-size="15" fill="#000">80</text>
<text transform="translate(326.9,571.5) scale(0.85,1)" font-family="Liberation Sans" font-size="15" fill="#000">90</text>
<text transform="translate(355.0,599.6) scale(0.85,1)" font-family="Liberation Sans" font-size="15" fill="#000">100</text>
<path d="M228.02 486.15 L232.40 474.98 L240.89 483.46 L229.72 487.85 L225.47 498.88 L216.99 490.39Z" fill="#000"/>
</g>
<g shape-rendering="crispEdges">
<rect x="64" y="90" width="9" height="9" fill="#FFFFFF" />
<rect x="65" y="91" width="7" height="7" fill="#000000" />
<rect x="66" y="92" width="5" height="5" fill="#00FF00" />
<rect x="65" y="223" width="7" height="7" fill="#000000" />
<rect x="66" y="224" width="5" height="5" fill="#00FF00" />
<rect x="64" y="354" width="9" height="9" fill="#FFFFFF" />
<rect x="65" y="355" width="7" height="7" fill="#000000" />
<rect x="66" y="356" width="5" height="5" fill="#00FF00" />
<rect x="197" y="91" width="7" height="7" fill="#000000" />
<rect x="198" y="92" width="5" height="5" fill="#00FF00" />
<rect x="197" y="355" width="7" height="7" fill="#000000" />
<rect x="198" y="356" width="5" height="5" fill="#00FF00" />
<rect x="328" y="90" width="9" height="9" fill="#FFFFFF" />
<rect x="329" y="91" width="7" height="7" fill="#000000" />
<rect x="330" y="92" width="5" height="5" fill="#00FF00" />
<rect x="329" y="223" width="7" height="7" fill="#000000" />
<rect x="330" y="224" width="5" height="5" fill="#00FF00" />
<rect x="328" y="354" width="9" height="9" fill="#FFFFFF" />
<rect x="329" y="355" width="7" height="7" fill="#000000" />
<rect x="330" y="356" width="5" height="5" fill="#00FF00" />
</g>
<g shape-rendering="crispEdges">
<rect x="284" y="366" width="21" height="21" fill="#808080" />
<rect x="285" y="367" width="19" height="19" fill="#F8F8F0" />
<rect x="308" y="366" width="21" height="21" fill="#808080" />
<rect x="309" y="367" width="19" height="19" fill="#F8F8F0" />
<rect x="286" y="381" width="16" height="2" fill="#000000" />
</g>
<text x="292.6" y="379.6" text-anchor="middle" font-family="Liberation Serif" font-weight="bold" font-size="16" fill="#000080">A</text>
<path d="M310.5 375 L315 369.5 L320 374.5 L315 380 Z" fill="#FFFFFF" stroke="#000" stroke-width="1"/>
<path d="M312.5 371 Q314.5 367.5 317 370.5 L316.5 374" fill="none" stroke="#000" stroke-width="1"/>
<path d="M319 371.5 L321.5 371 L323.5 374 L323.5 377 L320 376 Z" fill="#000"/>
<rect x="318.5" y="375.5" width="7" height="7" fill="#FFFFFF" stroke="#000" stroke-width="1" shape-rendering="crispEdges"/>
<g shape-rendering="crispEdges">
<rect x="543" y="33" width="16" height="492" fill="url(#dith)" />
<rect x="543" y="32" width="16" height="16" fill="#D4D0C8" />
<rect x="544" y="33" width="14" height="1" fill="#FFFFFF" />
<rect x="544" y="33" width="1" height="14" fill="#FFFFFF" />
<rect x="543" y="47" width="16" height="1" fill="#404040" />
<rect x="558" y="32" width="1" height="16" fill="#404040" />
<rect x="544" y="46" width="14" height="1" fill="#808080" />
<rect x="557" y="33" width="1" height="14" fill="#808080" />
<rect x="543" y="509" width="16" height="16" fill="#D4D0C8" />
<rect x="544" y="510" width="14" height="1" fill="#FFFFFF" />
<rect x="544" y="510" width="1" height="14" fill="#FFFFFF" />
<rect x="543" y="524" width="16" height="1" fill="#404040" />
<rect x="558" y="509" width="1" height="16" fill="#404040" />
<rect x="544" y="523" width="14" height="1" fill="#808080" />
<rect x="557" y="510" width="1" height="14" fill="#808080" />
<rect x="543" y="68" width="16" height="197" fill="#D4D0C8" />
<rect x="544" y="69" width="14" height="1" fill="#FFFFFF" />
<rect x="544" y="69" width="1" height="195" fill="#FFFFFF" />
<rect x="543" y="264" width="16" height="1" fill="#404040" />
<rect x="558" y="68" width="1" height="197" fill="#404040" />
<rect x="544" y="263" width="14" height="1" fill="#808080" />
<rect x="557" y="69" width="1" height="195" fill="#808080" />
<rect x="15" y="525" width="528" height="16" fill="url(#dith)" />
<rect x="14" y="525" width="16" height="16" fill="#D4D0C8" />
<rect x="15" y="526" width="14" height="1" fill="#FFFFFF" />
<rect x="15" y="526" width="1" height="14" fill="#FFFFFF" />
<rect x="14" y="540" width="16" height="1" fill="#404040" />
<rect x="29" y="525" width="1" height="16" fill="#404040" />
<rect x="15" y="539" width="14" height="1" fill="#808080" />
<rect x="28" y="526" width="1" height="14" fill="#808080" />
<rect x="527" y="525" width="16" height="16" fill="#D4D0C8" />
<rect x="528" y="526" width="14" height="1" fill="#FFFFFF" />
<rect x="528" y="526" width="1" height="14" fill="#FFFFFF" />
<rect x="527" y="540" width="16" height="1" fill="#404040" />
<rect x="542" y="525" width="1" height="16" fill="#404040" />
<rect x="528" y="539" width="14" height="1" fill="#808080" />
<rect x="541" y="526" width="1" height="14" fill="#808080" />
<rect x="59" y="525" width="309" height="16" fill="#D4D0C8" />
<rect x="60" y="526" width="307" height="1" fill="#FFFFFF" />
<rect x="60" y="526" width="1" height="14" fill="#FFFFFF" />
<rect x="59" y="540" width="309" height="1" fill="#404040" />
<rect x="367" y="525" width="1" height="16" fill="#404040" />
<rect x="60" y="539" width="307" height="1" fill="#808080" />
<rect x="366" y="526" width="1" height="14" fill="#808080" />
<rect x="550" y="37" width="1" height="1" fill="#000000" />
<rect x="550" y="518" width="1" height="1" fill="#000000" />
<rect x="19" y="532" width="1" height="1" fill="#000000" />
<rect x="536" y="532" width="1" height="1" fill="#000000" />
<rect x="549" y="38" width="3" height="1" fill="#000000" />
<rect x="549" y="517" width="3" height="1" fill="#000000" />
<rect x="20" y="531" width="1" height="3" fill="#000000" />
<rect x="535" y="531" width="1" height="3" fill="#000000" />
<rect x="548" y="39" width="5" height="1" fill="#000000" />
<rect x="548" y="516" width="5" height="1" fill="#000000" />
<rect x="21" y="530" width="1" height="5" fill="#000000" />
<rect x="534" y="530" width="1" height="5" fill="#000000" />
<rect x="547" y="40" width="7" height="1" fill="#000000" />
<rect x="547" y="515" width="7" height="1" fill="#000000" />
<rect x="22" y="529" width="1" height="7" fill="#000000" />
<rect x="533" y="529" width="1" height="7" fill="#000000" />
</g>
</svg>
</body></html>
